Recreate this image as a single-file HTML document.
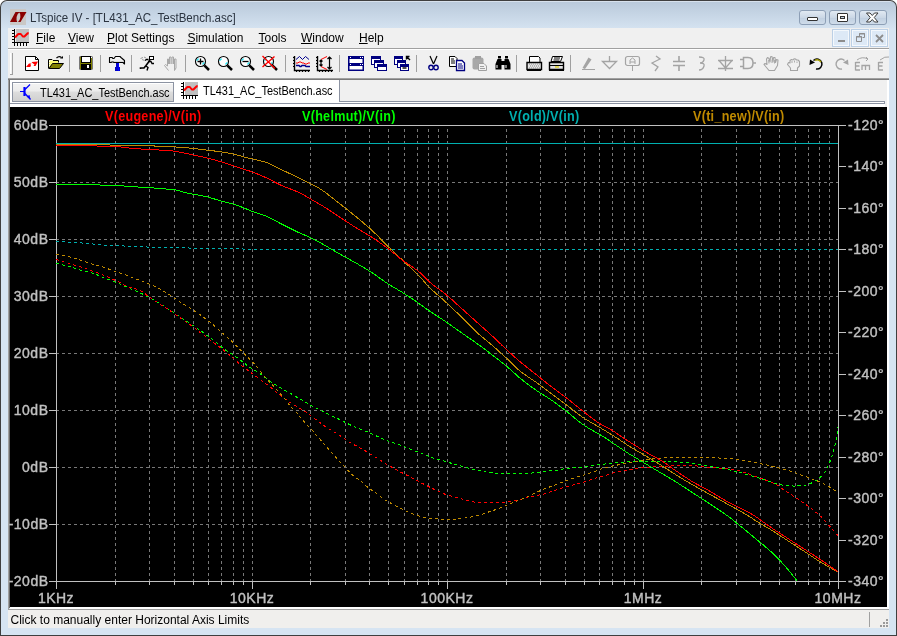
<!DOCTYPE html><html><head><meta charset="utf-8"><style>
*{margin:0;padding:0;box-sizing:border-box}
html,body{width:897px;height:636px;overflow:hidden;background:#fff}
body{position:relative;will-change:transform;font-family:"Liberation Sans",sans-serif;font-size:12px;color:#000}
.a{position:absolute}
.t{position:absolute;font-family:"Liberation Sans",sans-serif;font-size:12px;white-space:nowrap;line-height:14px;transform-origin:0 0}
.u{text-decoration:underline;text-underline-offset:1px}
svg{position:absolute;overflow:visible}
</style></head><body>

<div class="a" style="left:0;top:0;width:897px;height:636px;background:#3f3f3f;border-radius:7px 7px 0 0"></div>
<div class="a" style="left:1px;top:1px;width:895px;height:634px;border-radius:6px 6px 0 0;background:linear-gradient(#e6edf5 0px,#bacadb 1.5px,#d4e2f0 27px,#d6e4f2 28px,#d6e4f2 100%)"></div>
<svg class="a" style="left:10px;top:9px" width="16" height="16" viewBox="0 0 16 16"><rect width="16" height="16" fill="#cac8c6"/><path d="M5.5 3H10Q7.2 4.5 6.6 8Q6.2 11 7.2 13H0Z" fill="#8a0000"/><path d="M9 3H16.5L10.5 13H8Q10 11.5 10.4 8Q10.7 4.5 9 3Z" fill="#8a0000"/></svg>
<div class="t" style="left:30px;top:11px;color:#2b3440;transform:scaleX(0.962)">LTspice IV - [TL431_AC_TestBench.asc]</div>
<div class="a" style="left:799px;top:10px;width:27px;height:15px;border:1px solid #8d9fb6;border-radius:3px;background:linear-gradient(#e1e9f2,#cbd8e6 50%,#c0cfe0 51%,#cfdcea)"></div>
<div class="a" style="left:807px;top:17px;width:11px;height:4px;background:#fff;border:1px solid #333;border-radius:1px"></div>
<div class="a" style="left:829px;top:10px;width:27px;height:15px;border:1px solid #8d9fb6;border-radius:3px;background:linear-gradient(#e1e9f2,#cbd8e6 50%,#c0cfe0 51%,#cfdcea)"></div>
<div class="a" style="left:837px;top:13px;width:11px;height:9px;background:#fff;border:1px solid #333;border-radius:1px"></div><div class="a" style="left:840px;top:16px;width:5px;height:3px;background:#c4d3e3;border:1px solid #333"></div>
<div class="a" style="left:859px;top:10px;width:28px;height:15px;border:1px solid #8d9fb6;border-radius:3px;background:linear-gradient(#e1e9f2,#cbd8e6 50%,#c0cfe0 51%,#cfdcea)"></div>
<svg class="a" style="left:866px;top:12px" width="13" height="11" viewBox="0 0 13 11"><path d="M0.5 1H4L6.25 3.5L8.5 1H12L8.25 5.5L12 10H8.5L6.25 7.5L4 10H0.5L4.25 5.5Z" fill="#fff" stroke="#3a3a3a" stroke-linejoin="round"/></svg>
<div class="a" style="left:8px;top:28px;width:881px;height:20px;background:#f0f0f0"></div>
<div class="a" style="left:8px;top:48px;width:881px;height:1px;background:#a0a0a0"></div>
<div class="a" style="left:8px;top:49px;width:881px;height:1px;background:#fff"></div>
<svg class="a" style="left:12px;top:29px" width="18" height="17" viewBox="0 0 18 17" ><rect x="4" y="0" width="13" height="13" fill="#c0c0c0"/><path d="M2.5 0V17M0 13.5H17M0 1.5H2M0 4.5H2M0 7.5H2M0 10.5H2M5.5 14V17M8.5 14V17M11.5 14V17M14.5 14V17" stroke="#000" fill="none"/><path d="M3 8.5L6.3 5L8.8 5L10.8 7.5L12.4 7.5L15.7 4.2L16.7 4.5" stroke="#f00" stroke-width="2" fill="none" stroke-linejoin="round"/></svg>
<div class="t mt" style="left:36px;top:31px;color:#000"><span class="u">F</span>ile</div>
<div class="t mt" style="left:68px;top:31px;color:#000"><span class="u">V</span>iew</div>
<div class="t mt" style="left:107px;top:31px;color:#000"><span class="u">P</span>lot Settings</div>
<div class="t mt" style="left:187.4px;top:31px;color:#000"><span class="u">S</span>imulation</div>
<div class="t mt" style="left:258.5px;top:31px;color:#000"><span class="u">T</span>ools</div>
<div class="t mt" style="left:301px;top:31px;color:#000"><span class="u">W</span>indow</div>
<div class="t mt" style="left:359px;top:31px;color:#000"><span class="u">H</span>elp</div>
<div class="a" style="left:832px;top:29px;width:18px;height:18px;background:#dde9f6;border:1px solid #bcd0e6;box-shadow:inset 0 0 0 1px #f4f8fc"></div>
<div class="a" style="left:838px;top:40px;width:7px;height:2px;background:#8d8d8d"></div>
<div class="a" style="left:851px;top:29px;width:18px;height:18px;background:#dde9f6;border:1px solid #bcd0e6;box-shadow:inset 0 0 0 1px #f4f8fc"></div>
<svg class="a" style="left:856px;top:33px" width="9" height="9" viewBox="0 0 9 9"><path d="M3.5 .5H8.5V4.5H6.5M.5 3.5H5.5V8.5H.5Z M3.5 .5V3.5" stroke="#8d8d8d" fill="none"/><path d="M3 1H9M0 4H6" stroke="#8d8d8d"/></svg>
<div class="a" style="left:870px;top:29px;width:18px;height:18px;background:#dde9f6;border:1px solid #bcd0e6;box-shadow:inset 0 0 0 1px #f4f8fc"></div>
<svg class="a" style="left:875px;top:34px" width="9" height="9" viewBox="0 0 9 9"><path d="M1 1L8 8M8 1L1 8" stroke="#8d8d8d" stroke-width="1.8"/></svg>
<div class="a" style="left:8px;top:50px;width:881px;height:28px;background:#f0f0f0"></div>
<div class="a" style="left:10px;top:53px;width:1px;height:22px;background:#fff"></div>
<div class="a" style="left:12px;top:53px;width:1px;height:22px;background:#a0a0a0"></div>
<div class="a" style="left:10px;top:74px;width:3px;height:1px;background:#a0a0a0"></div>
<div class="a" style="left:69px;top:55px;width:1px;height:17px;background:#a0a0a0"></div>
<div class="a" style="left:100px;top:55px;width:1px;height:17px;background:#a0a0a0"></div>
<div class="a" style="left:131px;top:55px;width:1px;height:17px;background:#a0a0a0"></div>
<div class="a" style="left:185px;top:55px;width:1px;height:17px;background:#a0a0a0"></div>
<div class="a" style="left:285px;top:55px;width:1px;height:17px;background:#a0a0a0"></div>
<div class="a" style="left:339px;top:55px;width:1px;height:17px;background:#a0a0a0"></div>
<div class="a" style="left:416px;top:55px;width:1px;height:17px;background:#a0a0a0"></div>
<div class="a" style="left:516px;top:55px;width:1px;height:17px;background:#a0a0a0"></div>
<div class="a" style="left:570px;top:55px;width:1px;height:17px;background:#a0a0a0"></div>
<svg class="a" style="left:25px;top:56px" width="14" height="15" viewBox="0 0 14 15" ><path d="M0.5 0.5H10.5L13.5 3.5V14.5H0.5Z" fill="#fff" stroke="#000"/><path d="M10.5 0.5V3.5H13.5" fill="none" stroke="#000"/><path d="M1 11 L4 7.5 L6.5 7.5 L5.5 8.5 L6 10 L5 11 Z" fill="#f00"/><path d="M6.5 6 L13 5.5 L10.5 10 L8.5 10 L9.5 8.5 L8 7.5 Z" fill="#f00"/></svg>
<svg class="a" style="left:48px;top:56px" width="16" height="14" viewBox="0 0 16 14" ><path d="M0.5 12.5V3.5H4L5 4.5H10.5V6.5" fill="#f8f870" stroke="#000"/><path d="M1.5 4.5H4.5M1.5 12V5" stroke="#fff" stroke-dasharray="1 1"/><path d="M1 12.5L4.5 7.5H15.5L11.5 12.5Z" fill="#808000" stroke="#000"/><path d="M8.5 2Q11 -0.5 13.5 1.5" stroke="#000" fill="none" stroke-width="1.2"/><path d="M12 2.5H15V0Z" fill="#000"/></svg>
<svg class="a" style="left:79px;top:56px" width="14" height="14" viewBox="0 0 14 14" ><rect x="0.5" y="0.5" width="13" height="13" fill="#000"/><rect x="1" y="1" width="12" height="12" fill="#808000"/><rect x="2.5" y="0.5" width="9" height="6" fill="#fff" stroke="#000"/><rect x="2" y="8" width="10" height="6" fill="#000"/><rect x="8" y="9" width="2" height="3" fill="#fff"/><rect x="12" y="1" width="1" height="1" fill="#fff"/></svg>
<svg class="a" style="left:108px;top:56px" width="18" height="15" viewBox="0 0 18 15" ><defs><linearGradient id="hg" x1="0" y1="0" x2="0" y2="1"><stop offset="0" stop-color="#fff"/><stop offset="0.6" stop-color="#e8e8e8"/><stop offset="1" stop-color="#909090"/></linearGradient></defs><path d="M1.5 1.5H4L5 2.5H6L7.5 0.5H12L13 1.5L16.5 4.5V8L15 6.5H6L5 6H4L3 6.5H1.5Z" fill="url(#hg)" stroke="#000" stroke-width="1.1" stroke-linejoin="round"/><rect x="8" y="7" width="3" height="4.5" fill="#0000c8"/><rect x="7" y="11" width="5" height="4" fill="#0000c8"/><rect x="10" y="7" width="1" height="8" fill="#0000ff"/></svg>
<svg class="a" style="left:140px;top:56px" width="15" height="15" viewBox="0 0 15 15" ><path d="M0.5 13V12H4L6 9.5L9 5.5L10 4" stroke="#000" stroke-width="1.6" fill="none"/><path d="M6 10L8 11.5L7 14.5" stroke="#000" stroke-width="1.4" fill="none"/><path d="M8 5.5H11L12 7.5H14M5 4.5L6.5 3.5H8.5" stroke="#000" stroke-width="1.3" fill="none"/><rect x="9.5" y="0.5" width="4" height="3" fill="#fff" stroke="#000"/><path d="M2 3.5L4.5 4.5M0.5 2.5L3 1.5M4 1L6 2" stroke="#999"/></svg>
<svg class="a" style="left:164px;top:56px" width="14" height="15" viewBox="0 0 14 15" ><path d="M4.5 14.5L0.5 9.5L1.5 8.5L3.5 10V3H4.5V8M5.5 8V1H7V8M8 8V1H9.5V8M10.5 8V3H12V12L10.5 14.5Z" fill="none" stroke="#a8a8a8"/></svg>
<svg class="a" style="left:194px;top:56px" width="16" height="16" viewBox="0 0 16 16" ><circle cx="6.5" cy="5.5" r="5" fill="#fff" stroke="#000" stroke-width="1.15"/><path d="M2.6 4.6L4.6 2.6M8.4 8.4L10.4 6.4" stroke="#18e8f8" stroke-width="1.3" fill="none"/><path d="M10.3 9.3L15 14" stroke="#000" stroke-width="2.5"/><path d="M3.5 5.5H9.5M6.5 2.5V8.5" stroke="#000" stroke-width="1.3"/></svg>
<svg class="a" style="left:217px;top:56px" width="16" height="16" viewBox="0 0 16 16" ><circle cx="6.5" cy="5.5" r="5" fill="#fff" stroke="#000" stroke-width="1.15"/><path d="M2.6 4.6L4.6 2.6M8.4 8.4L10.4 6.4" stroke="#18e8f8" stroke-width="1.3" fill="none"/><path d="M10.3 9.3L15 14" stroke="#000" stroke-width="2.5"/></svg>
<svg class="a" style="left:239px;top:56px" width="16" height="16" viewBox="0 0 16 16" ><circle cx="6.5" cy="5.5" r="5" fill="#fff" stroke="#000" stroke-width="1.15"/><path d="M2.6 4.6L4.6 2.6M8.4 8.4L10.4 6.4" stroke="#18e8f8" stroke-width="1.3" fill="none"/><path d="M10.3 9.3L15 14" stroke="#000" stroke-width="2.5"/><path d="M3.5 5.5H9.5" stroke="#000" stroke-width="1.3"/></svg>
<svg class="a" style="left:262px;top:56px" width="16" height="16" viewBox="0 0 16 16" ><circle cx="6.5" cy="5.5" r="5" fill="#fff" stroke="#000" stroke-width="1.15"/><path d="M2.6 4.6L4.6 2.6M8.4 8.4L10.4 6.4" stroke="#18e8f8" stroke-width="1.3" fill="none"/><path d="M10.3 9.3L15 14" stroke="#000" stroke-width="2.5"/><path d="M0.5 0L13 12.5M12.5 0.5L0.5 11" stroke="#f00" stroke-width="1.4"/></svg>
<svg class="a" style="left:293px;top:56px" width="18" height="16" viewBox="0 0 18 16" ><path d="M1.5 0V14.5H17" stroke="#000" fill="none" stroke-width="1.4"/><path d="M0 1.5H1M0 4.5H1M0 7.5H1M0 10.5H1M3.5 15V16M6.5 15V16M9.5 15V16M12.5 15V16M15.5 15V16" stroke="#000"/><path d="M3 3.5L6.5 0.5L9.5 3.5L12.5 0.5L16 3.5" stroke="#00008c" fill="none"/><path d="M3 7H5L6 6H8L9 7H11L12 8H14L15 7H17" stroke="#f00" fill="none"/><path d="M3 9.5H6L7 10.5H8L9 9.5H12L13 10.5H17" stroke="#00008c" stroke-width="1.5" fill="none"/></svg>
<svg class="a" style="left:316px;top:56px" width="18" height="16" viewBox="0 0 18 16" ><path d="M1.5 0V14.5H17" stroke="#000" fill="none" stroke-width="1.4"/><path d="M0 1.5H1M0 4.5H1M0 7.5H1M0 10.5H1M3.5 15V16M6.5 15V16M9.5 15V16M12.5 15V16M15.5 15V16" stroke="#000"/><path d="M11 0.5L5 3.5M5 10.5L11 13.5" stroke="#f00" fill="none"/><path d="M5 4V10M3.5 5.5L5 4L6.5 5.5M3.5 8.5L5 10L6.5 8.5" stroke="#000" fill="none" stroke-width="1.2"/><path d="M13.5 1V13M11.5 3L13.5 1L15.5 3M11.5 11L13.5 13L15.5 11" stroke="#000" fill="none" stroke-width="1.2"/></svg>
<svg class="a" style="left:348px;top:56px" width="16" height="15" viewBox="0 0 16 15" ><rect x="0.75" y="0.75" width="14.5" height="13.5" fill="#fff" stroke="#000080" stroke-width="1.5"/><rect x="0" y="0" width="16" height="3" fill="#000080"/><rect x="0" y="7" width="16" height="3" fill="#000080"/><path d="M2 1.5h1M12 1.5h1M14 1.5h1M2 8.5h1M12 8.5h1M14 8.5h1" stroke="#fff"/></svg>
<svg class="a" style="left:371px;top:56px" width="16" height="15" viewBox="0 0 16 15" ><rect x="0.5" y="0.5" width="9" height="8" fill="#fff" stroke="#000080"/><rect x="0" y="0" width="10" height="3" fill="#000080"/><rect x="3.5" y="4.5" width="9" height="7" fill="#fff" stroke="#000080"/><rect x="3" y="4" width="10" height="3" fill="#000080"/><rect x="6.5" y="8.5" width="9" height="6" fill="#fff" stroke="#000080"/><rect x="6" y="8" width="10" height="3" fill="#000080"/></svg>
<svg class="a" style="left:394px;top:56px" width="17" height="15" viewBox="0 0 17 15" ><rect x="0.5" y="0.5" width="8" height="8" fill="#fff" stroke="#000080"/><rect x="0" y="0" width="9" height="3" fill="#000080"/><rect x="3.5" y="4.5" width="8" height="7" fill="#fff" stroke="#000080"/><rect x="3" y="4" width="9" height="3" fill="#000080"/><rect x="6.5" y="8.5" width="8" height="6" fill="#fff" stroke="#000080"/><rect x="6" y="8" width="9" height="3" fill="#000080"/><path d="M8.5 12H12.5" stroke="#000" stroke-width="1.4"/><path d="M16 4L12.5 0.5M12.5 3.5V0.5H15.5" stroke="#000" stroke-width="1.4" fill="none"/></svg>
<svg class="a" style="left:428px;top:56px" width="11" height="15" viewBox="0 0 11 15" ><path d="M2 0L5.5 8M9 0L5.5 8" stroke="#000" fill="none" stroke-width="1.2"/><circle cx="3" cy="11.5" r="2.2" fill="none" stroke="#000080" stroke-width="1.4"/><circle cx="8" cy="11.5" r="2.2" fill="none" stroke="#000080" stroke-width="1.4"/></svg>
<svg class="a" style="left:449px;top:56px" width="16" height="15" viewBox="0 0 16 15" ><path d="M0.5 0.5H6L8 2.5V10.5H0.5Z" fill="#fff" stroke="#000"/><path d="M2 3H5M2 5H6M2 7H6" stroke="#000"/><path d="M7.5 4.5H13L15.5 7V14.5H7.5Z" fill="#fff" stroke="#000080" stroke-width="1.3"/><path d="M9 8H13M9 10H14M9 12H14" stroke="#000080"/></svg>
<svg class="a" style="left:472px;top:56px" width="15" height="15" viewBox="0 0 15 15" ><rect x="0.5" y="1.5" width="11" height="12" rx="2" fill="#a8a8a8"/><rect x="3" y="0" width="6" height="3" fill="#a0a0a0"/><path d="M6.5 7.5H12L14.5 10V14.5H6.5Z" fill="#f0f0f0" stroke="#a0a0a0"/><path d="M8 10.5H12M8 12.5H13" stroke="#a0a0a0"/></svg>
<svg class="a" style="left:495px;top:56px" width="16" height="14" viewBox="0 0 16 14" ><path d="M0.5 13.5V8L2.5 3H6.5V13.5ZM9.5 13.5V3H13.5L15.5 8V13.5Z" fill="#000"/><rect x="6" y="5" width="4" height="4" fill="#000"/><rect x="3" y="0" width="3" height="2.5" fill="#000"/><rect x="10" y="0" width="3" height="2.5" fill="#000"/><path d="M2 9V12M11 9V12" stroke="#fff"/></svg>
<svg class="a" style="left:526px;top:56px" width="16" height="15" viewBox="0 0 16 15" ><path d="M3.5 0.5H12.5L14 2V6.5H3.5Z" fill="#fff" stroke="#000"/><path d="M1 6.5H15.5V13.5H1Z" fill="#e4e4e4" stroke="#000" stroke-width="1.4"/><path d="M3 8h1M5 8h1M7 8h1M9 8h1M11 8h1M13 8h1M4 10h1M6 10h1M8 10h1M10 10h1M12 10h1M3 12h1M5 12h1M7 12h1M9 12h1M11 12h1M13 12h1" stroke="#888"/><path d="M1 14.5H15" stroke="#000"/></svg>
<svg class="a" style="left:548px;top:56px" width="17" height="15" viewBox="0 0 17 15" ><path d="M4.5 0.5H14.5L12.5 5.5H3Z" fill="#fff" stroke="#000"/><path d="M6 2H12M5.5 4H11.5" stroke="#000"/><path d="M1.5 6.5H15.5V13.5H1.5Z" fill="#e4e4e4" stroke="#000" stroke-width="1.4"/><path d="M2 9.5H15" stroke="#000"/><path d="M7 11H11" stroke="#e0d000" stroke-width="1.2"/><path d="M1 14.5H16" stroke="#000"/></svg>
<svg class="a" style="left:581px;top:56px" width="15" height="14" viewBox="0 0 15 14" ><path d="M1.5 12L7.5 1.5L10.5 3.5L4 13Z" fill="#a4a4a4"/><path d="M1 13.5H14" stroke="#a4a4a4"/></svg>
<svg class="a" style="left:602px;top:56px" width="15" height="14" viewBox="0 0 15 14" ><path d="M7.5 0V5.5M0.5 5.5H14.5L7.5 12.5Z" stroke="#a4a4a4" fill="none" stroke-width="1.3"/></svg>
<svg class="a" style="left:625px;top:56px" width="15" height="15" viewBox="0 0 15 15" ><rect x="0.5" y="0.5" width="14" height="9" rx="2" fill="none" stroke="#a4a4a4" stroke-width="1.2"/><path d="M5 8V4L7.5 2L10 4V8M5 6H10" stroke="#a4a4a4" fill="none"/><path d="M7.5 10V15" stroke="#a4a4a4"/></svg>
<svg class="a" style="left:650px;top:56px" width="12" height="15" viewBox="0 0 12 15" ><path d="M6 0L10 3L2 7L8 11L5 15" stroke="#a4a4a4" fill="none" stroke-width="1.3"/></svg>
<svg class="a" style="left:673px;top:56px" width="12" height="15" viewBox="0 0 12 15" ><path d="M6 0V5M0 5.5H12M0 9.5H12M6 10V15" stroke="#a4a4a4" stroke-width="1.6"/></svg>
<svg class="a" style="left:698px;top:56px" width="8" height="15" viewBox="0 0 8 15" ><path d="M1 1Q7 1 6 4Q5 7 2 7Q7 7 6 10Q5 14 1 14" stroke="#a4a4a4" fill="none" stroke-width="1.3"/></svg>
<svg class="a" style="left:718px;top:56px" width="15" height="15" viewBox="0 0 15 15" ><path d="M7.5 0V15M0 4.5H15M0 12.5H15M1 4.5L7.5 12L14 4.5" stroke="#a4a4a4" fill="none" stroke-width="1.3"/></svg>
<svg class="a" style="left:740px;top:56px" width="16" height="14" viewBox="0 0 16 14" ><path d="M0 3.5H4M0 10.5H4M3.5 1.5H8Q13 1.5 13 7Q13 12.5 8 12.5H3.5ZM13 7H16" stroke="#a4a4a4" fill="none" stroke-width="1.5"/></svg>
<svg class="a" style="left:763px;top:56px" width="17" height="15" viewBox="0 0 17 15" ><path d="M6 14.5L1 8.5L2 7.5L4 8.5L3.5 3L4.5 1.5L6 2.5L7 6L7.5 0.8L9 0.5L10 6L10.5 1.5L12 1.5L12.5 6.5L13.5 3.5L15 4L14.5 9.5L11.5 14.5Z" fill="none" stroke="#a4a4a4" stroke-width="1.1" stroke-linejoin="round"/><path d="M6 7.5L5.5 4M9 7L9 3.5M11.5 7.5L11.5 4" stroke="#a4a4a4" stroke-width="0.9"/></svg>
<svg class="a" style="left:787px;top:58px" width="14" height="13" viewBox="0 0 14 13" ><path d="M3.5 12.5V10L0.5 6.5L1.5 4.5L3 5V2.5L4.5 1.5L6 2L7 0.8L8.5 1L9.5 2L11 2L12.5 3.5V8L10.5 10V12.5Z" fill="none" stroke="#a4a4a4" stroke-width="1.1" stroke-linejoin="round"/><path d="M5 5V3M7.5 4.5V2.5M10 5V3.5" stroke="#a4a4a4" stroke-width="0.9"/></svg>
<svg class="a" style="left:809px;top:57px" width="16" height="14" viewBox="0 0 16 14" ><path d="M4.5 3.5A5 5 0 1 1 7 12" stroke="#000" stroke-width="1.5" fill="none"/><path d="M6 3.2A5 5 0 0 1 12 5" stroke="#a8a000" stroke-width="1.5" fill="none"/><path d="M0.5 8L1 2.5L6 5.5Z" fill="#000"/></svg>
<svg class="a" style="left:833px;top:57px" width="16" height="14" viewBox="0 0 16 14" ><path d="M11.5 3.5A5 5 0 1 0 9 12" stroke="#a4a4a4" stroke-width="1.4" fill="none"/><path d="M15.5 8L15 2.5L10 5.5Z" fill="#a4a4a4"/></svg>
<svg class="a" style="left:854px;top:56px" width="17" height="15" viewBox="0 0 17 15" ><path d="M1.5 6V14.5M1.5 6.5H6M1.5 10H5.5M1.5 14H6M8 14V9.5H15.5V14M11.5 9.5V14" stroke="#a4a4a4" fill="none" stroke-width="1.3"/><path d="M3 4Q8 0 14 3M12 1L14 3L12 5" stroke="#a4a4a4" fill="none"/></svg>
<svg class="a" style="left:877px;top:56px" width="12" height="15" viewBox="0 0 12 15" ><path d="M1.5 6V14.5M1.5 6.5H6M1.5 10H5.5M1.5 14H6" stroke="#a4a4a4" fill="none" stroke-width="1.3"/><path d="M3 4Q8 0 12 1" stroke="#a4a4a4" fill="none"/></svg>
<div class="a" style="left:8px;top:78px;width:881px;height:1px;background:#a0a0a0"></div>
<div class="a" style="left:8px;top:79px;width:881px;height:1px;background:#7a7a7a"></div>
<div class="a" style="left:10px;top:80px;width:877px;height:27px;background:#fff"></div>
<div class="a" style="left:339px;top:80px;width:548px;height:27px;background:#f0f0f0"></div>
<div class="a" style="left:339px;top:80px;width:1px;height:22px;background:#8c93a2"></div>
<div class="a" style="left:339px;top:101px;width:546px;height:3px;background:#fff;border:1px solid #8c93a2;border-left:0"></div>
<div class="a" style="left:10px;top:103px;width:330px;height:1px;background:#8c93a2"></div>
<div class="a" style="left:10px;top:104px;width:875px;height:3px;background:#fff"></div>
<div class="a" style="left:12px;top:82px;width:162px;height:20px;border:1px solid #8c93a2;background:linear-gradient(#f3f3f3,#ececec 45%,#dddddd 50%,#d0d0d0)"></div>
<div class="a" style="left:13px;top:83px;width:160px;height:1px;background:#fff"></div>
<svg class="a" style="left:20px;top:84px" width="12" height="17" viewBox="0 0 12 17" ><path d="M4.5 3V12" stroke="#00f" stroke-width="2.2"/><path d="M0 7.5H4M5 5.5L10 0.5M5 9.5L10.5 15.5" stroke="#00f" stroke-width="1.2" fill="none"/><path d="M6.5 12.5L10.5 15.5L9.5 11Z" fill="#00f"/></svg>
<div class="t tt" style="left:40px;top:86px;transform:scaleX(0.912)">TL431_AC_TestBench.asc</div>
<svg class="a" style="left:181px;top:82px" width="18" height="17" viewBox="0 0 18 17" ><rect x="4" y="0" width="13" height="13" fill="#c0c0c0"/><path d="M2.5 0V17M0 13.5H17M0 1.5H2M0 4.5H2M0 7.5H2M0 10.5H2M5.5 14V17M8.5 14V17M11.5 14V17M14.5 14V17" stroke="#000" fill="none"/><path d="M3 8.5L6.3 5L8.8 5L10.8 7.5L12.4 7.5L15.7 4.2L16.7 4.5" stroke="#f00" stroke-width="2" fill="none" stroke-linejoin="round"/></svg>
<div class="t tt" style="left:203px;top:84px;transform:scaleX(0.912)">TL431_AC_TestBench.asc</div>
<div class="a" style="left:8px;top:80px;width:1px;height:529px;background:#a0a0a0"></div>
<div class="a" style="left:9px;top:80px;width:1px;height:528px;background:#696969"></div>
<div class="a" style="left:10px;top:107px;width:877px;height:500px;background:#000"></div>
<div class="a" style="left:887px;top:80px;width:2px;height:529px;background:#fff"></div>
<div class="a" style="left:10px;top:607px;width:879px;height:2px;background:#fff"></div>
<svg class="a" style="left:0;top:0" width="897" height="636" viewBox="0 0 897 636">
<defs><clipPath id="pc"><rect x="56" y="125" width="783" height="457"/></clipPath></defs>
<path d="M56.5 125V581 M115.5 125V581 M149.5 125V581 M174.5 125V581 M193.5 125V581 M208.5 125V581 M221.5 125V581 M233.5 125V581 M243.5 125V581 M252.5 125V581 M310.5 125V581 M345.5 125V581 M369.5 125V581 M388.5 125V581 M404.5 125V581 M417.5 125V581 M428.5 125V581 M438.5 125V581 M447.5 125V581 M506.5 125V581 M540.5 125V581 M565.5 125V581 M584.5 125V581 M599.5 125V581 M612.5 125V581 M624.5 125V581 M634.5 125V581 M643.5 125V581 M701.5 125V581 M736.5 125V581 M760.5 125V581 M779.5 125V581 M795.5 125V581 M808.5 125V581 M819.5 125V581 M829.5 125V581 M838.5 125V581" stroke="#787878" stroke-dasharray="3 3" stroke-dashoffset="2" shape-rendering="crispEdges"/>
<path d="M56 182.5H838 M56 239.5H838 M56 296.5H838 M56 353.5H838 M56 410.5H838 M56 467.5H838 M56 524.5H838" stroke="#787878" stroke-dasharray="3 3" shape-rendering="crispEdges"/>
<path d="M56.5 581V589 M115.5 581V585 M149.5 581V585 M174.5 581V585 M193.5 581V585 M208.5 581V585 M221.5 581V585 M233.5 581V585 M243.5 581V585 M252.5 581V589 M310.5 581V585 M345.5 581V585 M369.5 581V585 M388.5 581V585 M404.5 581V585 M417.5 581V585 M428.5 581V585 M438.5 581V585 M447.5 581V589 M506.5 581V585 M540.5 581V585 M565.5 581V585 M584.5 581V585 M599.5 581V585 M612.5 581V585 M624.5 581V585 M634.5 581V585 M643.5 581V589 M701.5 581V585 M736.5 581V585 M760.5 581V585 M779.5 581V585 M795.5 581V585 M808.5 581V585 M819.5 581V585 M829.5 581V585 M838.5 581V589 M49 125.5H56 M49 182.5H56 M49 239.5H56 M49 296.5H56 M49 353.5H56 M49 410.5H56 M49 467.5H56 M49 524.5H56 M49 581.5H56 M838 125.5H846 M838 166.5H846 M838 208.5H846 M838 249.5H846 M838 291.5H846 M838 332.5H846 M838 374.5H846 M838 415.5H846 M838 457.5H846 M838 498.5H846 M838 540.5H846 M838 581.5H846" stroke="#c0c0c0" shape-rendering="crispEdges"/>
<path d="M56.5 125V581.5M838.5 125V581.5M56 125.5H839M56 581.5H839" stroke="#c0c0c0" shape-rendering="crispEdges"/>
<g clip-path="url(#pc)" fill="none" shape-rendering="crispEdges">
<path d="M56 143.5H838" stroke="#00b0b0"/>
<path d="M56.0 241.6 L57.0 241.6 L58.0 241.6 L59.0 241.7 L60.0 241.7 L61.0 241.7 L62.0 241.8 L63.0 241.8 L64.0 241.8 L65.0 241.9 L66.0 241.9 L67.0 242.0 L68.0 242.0 L69.0 242.1 L70.0 242.1 L71.0 242.2 L72.0 242.2 L73.0 242.3 L74.0 242.3 L75.0 242.4 L76.0 242.5 L77.0 242.5 L78.0 242.6 L79.0 242.7 L80.0 242.8 L81.0 242.9 L82.0 243.0 L83.0 243.1 L84.0 243.2 L85.0 243.3 L86.0 243.4 L87.0 243.5 L88.0 243.6 L89.0 243.7 L90.0 243.8 L91.0 243.9 L92.0 243.9 L93.0 244.0 L94.0 244.1 L95.0 244.2 L96.0 244.3 L97.0 244.4 L98.0 244.5 L99.0 244.6 L100.0 244.7 L101.0 244.8 L102.0 244.8 L103.0 244.9 L104.0 245.0 L105.0 245.1 L106.0 245.2 L107.0 245.3 L108.0 245.3 L109.0 245.4 L110.0 245.4 L111.0 245.5 L112.0 245.5 L113.0 245.6 L114.0 245.6 L115.0 245.7 L116.0 245.7 L117.0 245.7 L118.0 245.8 L119.0 245.8 L120.0 245.8 L121.0 245.9 L122.0 245.9 L123.0 245.9 L124.0 246.0 L125.0 246.0 L126.0 246.0 L127.0 246.0 L128.0 246.1 L129.0 246.1 L130.0 246.1 L131.0 246.2 L132.0 246.2 L133.0 246.2 L134.0 246.3 L135.0 246.3 L136.0 246.4 L137.0 246.4 L138.0 246.5 L139.0 246.5 L140.0 246.6 L141.0 246.6 L142.0 246.7 L143.0 246.8 L144.0 246.8 L145.0 246.9 L146.0 246.9 L147.0 247.0 L148.0 247.1 L149.0 247.1 L150.0 247.2 L151.0 247.2 L152.0 247.2 L153.0 247.3 L154.0 247.3 L155.0 247.3 L156.0 247.4 L157.0 247.4 L158.0 247.4 L159.0 247.4 L160.0 247.5 L161.0 247.5 L162.0 247.5 L163.0 247.5 L164.0 247.6 L165.0 247.6 L166.0 247.6 L167.0 247.6 L168.0 247.6 L169.0 247.7 L170.0 247.7 L171.0 247.7 L172.0 247.7 L173.0 247.7 L174.0 247.7 L175.0 247.8 L176.0 247.8 L177.0 247.8 L178.0 247.8 L179.0 247.8 L180.0 247.8 L181.0 247.8 L182.0 247.9 L183.0 247.9 L184.0 247.9 L185.0 247.9 L186.0 247.9 L187.0 247.9 L188.0 247.9 L189.0 248.0 L190.0 248.0 L191.0 248.0 L192.0 248.0 L193.0 248.0 L194.0 248.0 L195.0 248.1 L196.0 248.1 L197.0 248.1 L198.0 248.1 L199.0 248.1 L200.0 248.1 L201.0 248.2 L202.0 248.2 L203.0 248.2 L204.0 248.2 L205.0 248.2 L206.0 248.3 L207.0 248.3 L208.0 248.3 L209.0 248.3 L210.0 248.4 L211.0 248.4 L212.0 248.4 L213.0 248.4 L214.0 248.4 L215.0 248.5 L216.0 248.5 L217.0 248.5 L218.0 248.5 L219.0 248.5 L220.0 248.6 L221.0 248.6 L222.0 248.6 L223.0 248.6 L224.0 248.7 L225.0 248.7 L226.0 248.7 L227.0 248.7 L228.0 248.7 L229.0 248.8 L230.0 248.8 L231.0 248.8 L232.0 248.8 L233.0 248.8 L234.0 248.8 L235.0 248.9 L236.0 248.9 L237.0 248.9 L238.0 248.9 L239.0 248.9 L240.0 248.9 L241.0 248.9 L242.0 248.9 L243.0 249.0 L244.0 249.0 L245.0 249.0 L246.0 249.0 L247.0 249.0 L248.0 249.0 L249.0 249.0 L250.0 249.0 L251.0 249.0 L252.0 249.0 L253.0 249.0 L254.0 249.0 L255.0 249.0 L256.0 249.0 L257.0 249.0 L258.0 249.0 L259.0 249.0 L260.0 249.0 L261.0 249.0 L262.0 249.0 L263.0 249.0 L264.0 249.0 L265.0 249.0 L266.0 249.0 L267.0 249.0 L268.0 249.0 L269.0 249.0 L270.0 249.0 L271.0 249.0 L272.0 249.0 L273.0 249.0 L274.0 249.0 L275.0 249.1 L276.0 249.1 L277.0 249.1 L278.0 249.1 L279.0 249.1 L280.0 249.1 L281.0 249.1 L282.0 249.1 L283.0 249.1 L284.0 249.1 L285.0 249.1 L286.0 249.1 L287.0 249.1 L288.0 249.1 L289.0 249.1 L290.0 249.1 L291.0 249.1 L292.0 249.1 L293.0 249.1 L294.0 249.1 L295.0 249.1 L296.0 249.1 L297.0 249.1 L298.0 249.1 L299.0 249.1 L300.0 249.1 L301.0 249.1 L302.0 249.1 L303.0 249.1 L304.0 249.1 L305.0 249.1 L306.0 249.1 L307.0 249.1 L308.0 249.1 L309.0 249.1 L310.0 249.1 L311.0 249.1 L312.0 249.1 L313.0 249.1 L314.0 249.1 L315.0 249.1 L316.0 249.1 L317.0 249.1 L318.0 249.1 L319.0 249.1 L320.0 249.1 L321.0 249.1 L322.0 249.1 L323.0 249.1 L324.0 249.1 L325.0 249.1 L326.0 249.1 L327.0 249.1 L328.0 249.1 L329.0 249.1 L330.0 249.1 L331.0 249.1 L332.0 249.1 L333.0 249.1 L334.0 249.1 L335.0 249.1 L336.0 249.1 L337.0 249.1 L338.0 249.1 L339.0 249.1 L340.0 249.1 L341.0 249.1 L342.0 249.1 L343.0 249.1 L344.0 249.1 L345.0 249.1 L346.0 249.1 L347.0 249.1 L348.0 249.1 L349.0 249.1 L350.0 249.1 L351.0 249.1 L352.0 249.1 L353.0 249.1 L354.0 249.1 L355.0 249.2 L356.0 249.2 L357.0 249.2 L358.0 249.2 L359.0 249.2 L360.0 249.2 L361.0 249.2 L362.0 249.2 L363.0 249.2 L364.0 249.2 L365.0 249.2 L366.0 249.2 L367.0 249.2 L368.0 249.2 L369.0 249.2 L370.0 249.2 L371.0 249.2 L372.0 249.2 L373.0 249.2 L374.0 249.2 L375.0 249.2 L376.0 249.2 L377.0 249.2 L378.0 249.2 L379.0 249.2 L380.0 249.2 L381.0 249.2 L382.0 249.2 L383.0 249.2 L384.0 249.2 L385.0 249.2 L386.0 249.2 L387.0 249.2 L388.0 249.2 L389.0 249.2 L390.0 249.2 L391.0 249.2 L392.0 249.2 L393.0 249.2 L394.0 249.2 L395.0 249.2 L396.0 249.2 L397.0 249.2 L398.0 249.2 L399.0 249.2 L400.0 249.2 L401.0 249.2 L402.0 249.2 L403.0 249.2 L404.0 249.2 L405.0 249.2 L406.0 249.2 L407.0 249.2 L408.0 249.2 L409.0 249.2 L410.0 249.2 L411.0 249.2 L412.0 249.2 L413.0 249.2 L414.0 249.2 L415.0 249.2 L416.0 249.2 L417.0 249.2 L418.0 249.2 L419.0 249.2 L420.0 249.2 L421.0 249.2 L422.0 249.2 L423.0 249.2 L424.0 249.2 L425.0 249.2 L426.0 249.2 L427.0 249.2 L428.0 249.2 L429.0 249.2 L430.0 249.2 L431.0 249.2 L432.0 249.2 L433.0 249.2 L434.0 249.2 L435.0 249.2 L436.0 249.2 L437.0 249.2 L438.0 249.2 L439.0 249.2 L440.0 249.2 L441.0 249.2 L442.0 249.2 L443.0 249.2 L444.0 249.2 L445.0 249.2 L446.0 249.2 L447.0 249.2 L448.0 249.2 L449.0 249.2 L450.0 249.2 L451.0 249.2 L452.0 249.2 L453.0 249.2 L454.0 249.2 L455.0 249.2 L456.0 249.2 L457.0 249.2 L458.0 249.2 L459.0 249.2 L460.0 249.2 L461.0 249.2 L462.0 249.2 L463.0 249.2 L464.0 249.2 L465.0 249.2 L466.0 249.2 L467.0 249.2 L468.0 249.2 L469.0 249.2 L470.0 249.2 L471.0 249.2 L472.0 249.2 L473.0 249.2 L474.0 249.2 L475.0 249.2 L476.0 249.2 L477.0 249.2 L478.0 249.2 L479.0 249.2 L480.0 249.2 L481.0 249.2 L482.0 249.2 L483.0 249.2 L484.0 249.2 L485.0 249.2 L486.0 249.2 L487.0 249.2 L488.0 249.2 L489.0 249.2 L490.0 249.2 L491.0 249.2 L492.0 249.2 L493.0 249.2 L494.0 249.2 L495.0 249.2 L496.0 249.2 L497.0 249.2 L498.0 249.2 L499.0 249.2 L500.0 249.2 L501.0 249.2 L502.0 249.2 L503.0 249.2 L504.0 249.2 L505.0 249.2 L506.0 249.2 L507.0 249.2 L508.0 249.2 L509.0 249.2 L510.0 249.2 L511.0 249.2 L512.0 249.2 L513.0 249.2 L514.0 249.2 L515.0 249.2 L516.0 249.2 L517.0 249.2 L518.0 249.2 L519.0 249.2 L520.0 249.2 L521.0 249.2 L522.0 249.2 L523.0 249.2 L524.0 249.2 L525.0 249.2 L526.0 249.2 L527.0 249.2 L528.0 249.2 L529.0 249.2 L530.0 249.2 L531.0 249.2 L532.0 249.2 L533.0 249.2 L534.0 249.2 L535.0 249.2 L536.0 249.2 L537.0 249.2 L538.0 249.2 L539.0 249.2 L540.0 249.2 L541.0 249.2 L542.0 249.2 L543.0 249.2 L544.0 249.2 L545.0 249.2 L546.0 249.2 L547.0 249.2 L548.0 249.2 L549.0 249.2 L550.0 249.2 L551.0 249.2 L552.0 249.2 L553.0 249.2 L554.0 249.2 L555.0 249.2 L556.0 249.2 L557.0 249.2 L558.0 249.2 L559.0 249.2 L560.0 249.2 L561.0 249.2 L562.0 249.2 L563.0 249.2 L564.0 249.2 L565.0 249.2 L566.0 249.2 L567.0 249.2 L568.0 249.2 L569.0 249.2 L570.0 249.2 L571.0 249.2 L572.0 249.2 L573.0 249.2 L574.0 249.2 L575.0 249.2 L576.0 249.2 L577.0 249.3 L578.0 249.3 L579.0 249.3 L580.0 249.3 L581.0 249.3 L582.0 249.3 L583.0 249.3 L584.0 249.3 L585.0 249.3 L586.0 249.3 L587.0 249.3 L588.0 249.3 L589.0 249.3 L590.0 249.3 L591.0 249.3 L592.0 249.3 L593.0 249.3 L594.0 249.3 L595.0 249.3 L596.0 249.3 L597.0 249.3 L598.0 249.3 L599.0 249.3 L600.0 249.3 L601.0 249.3 L602.0 249.3 L603.0 249.3 L604.0 249.3 L605.0 249.3 L606.0 249.3 L607.0 249.3 L608.0 249.3 L609.0 249.3 L610.0 249.3 L611.0 249.3 L612.0 249.3 L613.0 249.3 L614.0 249.3 L615.0 249.3 L616.0 249.3 L617.0 249.3 L618.0 249.3 L619.0 249.3 L620.0 249.3 L621.0 249.3 L622.0 249.3 L623.0 249.3 L624.0 249.3 L625.0 249.3 L626.0 249.3 L627.0 249.3 L628.0 249.3 L629.0 249.3 L630.0 249.3 L631.0 249.3 L632.0 249.3 L633.0 249.3 L634.0 249.3 L635.0 249.3 L636.0 249.3 L637.0 249.3 L638.0 249.3 L639.0 249.3 L640.0 249.3 L641.0 249.3 L642.0 249.3 L643.0 249.3 L644.0 249.3 L645.0 249.3 L646.0 249.3 L647.0 249.3 L648.0 249.3 L649.0 249.3 L650.0 249.3 L651.0 249.3 L652.0 249.3 L653.0 249.3 L654.0 249.3 L655.0 249.3 L656.0 249.3 L657.0 249.3 L658.0 249.3 L659.0 249.3 L660.0 249.3 L661.0 249.3 L662.0 249.3 L663.0 249.3 L664.0 249.3 L665.0 249.3 L666.0 249.3 L667.0 249.3 L668.0 249.3 L669.0 249.3 L670.0 249.3 L671.0 249.3 L672.0 249.3 L673.0 249.3 L674.0 249.3 L675.0 249.3 L676.0 249.3 L677.0 249.3 L678.0 249.3 L679.0 249.3 L680.0 249.3 L681.0 249.3 L682.0 249.3 L683.0 249.3 L684.0 249.3 L685.0 249.3 L686.0 249.3 L687.0 249.3 L688.0 249.3 L689.0 249.3 L690.0 249.3 L691.0 249.3 L692.0 249.3 L693.0 249.3 L694.0 249.3 L695.0 249.3 L696.0 249.3 L697.0 249.3 L698.0 249.3 L699.0 249.3 L700.0 249.3 L701.0 249.3 L702.0 249.3 L703.0 249.3 L704.0 249.3 L705.0 249.3 L706.0 249.3 L707.0 249.3 L708.0 249.3 L709.0 249.3 L710.0 249.3 L711.0 249.3 L712.0 249.3 L713.0 249.3 L714.0 249.3 L715.0 249.3 L716.0 249.3 L717.0 249.3 L718.0 249.3 L719.0 249.3 L720.0 249.3 L721.0 249.3 L722.0 249.3 L723.0 249.3 L724.0 249.3 L725.0 249.3 L726.0 249.3 L727.0 249.3 L728.0 249.3 L729.0 249.3 L730.0 249.3 L731.0 249.3 L732.0 249.3 L733.0 249.3 L734.0 249.3 L735.0 249.3 L736.0 249.3 L737.0 249.3 L738.0 249.3 L739.0 249.3 L740.0 249.3 L741.0 249.3 L742.0 249.3 L743.0 249.3 L744.0 249.3 L745.0 249.3 L746.0 249.3 L747.0 249.3 L748.0 249.3 L749.0 249.3 L750.0 249.3 L751.0 249.3 L752.0 249.3 L753.0 249.3 L754.0 249.3 L755.0 249.3 L756.0 249.3 L757.0 249.3 L758.0 249.3 L759.0 249.3 L760.0 249.3 L761.0 249.3 L762.0 249.3 L763.0 249.3 L764.0 249.3 L765.0 249.3 L766.0 249.3 L767.0 249.3 L768.0 249.3 L769.0 249.3 L770.0 249.3 L771.0 249.3 L772.0 249.3 L773.0 249.3 L774.0 249.3 L775.0 249.3 L776.0 249.3 L777.0 249.3 L778.0 249.3 L779.0 249.3 L780.0 249.3 L781.0 249.3 L782.0 249.3 L783.0 249.3 L784.0 249.3 L785.0 249.3 L786.0 249.3 L787.0 249.3 L788.0 249.3 L789.0 249.3 L790.0 249.3 L791.0 249.3 L792.0 249.3 L793.0 249.3 L794.0 249.3 L795.0 249.3 L796.0 249.3 L797.0 249.3 L798.0 249.3 L799.0 249.3 L800.0 249.3 L801.0 249.3 L802.0 249.3 L803.0 249.3 L804.0 249.3 L805.0 249.3 L806.0 249.3 L807.0 249.3 L808.0 249.3 L809.0 249.3 L810.0 249.3 L811.0 249.3 L812.0 249.3 L813.0 249.3 L814.0 249.3 L815.0 249.3 L816.0 249.3 L817.0 249.3 L818.0 249.3 L819.0 249.3 L820.0 249.3 L821.0 249.3 L822.0 249.3 L823.0 249.3 L824.0 249.3 L825.0 249.3 L826.0 249.3 L827.0 249.3 L828.0 249.3 L829.0 249.3 L830.0 249.3 L831.0 249.3 L832.0 249.3 L833.0 249.3 L834.0 249.3 L835.0 249.3 L836.0 249.3 L837.0 249.3 L838.0 249.3" stroke="#00b0b0" stroke-dasharray="3 3"/>
<path d="M56.0 263.3 L57.0 263.5 L58.0 263.7 L59.0 264.0 L60.0 264.2 L61.0 264.4 L62.0 264.7 L63.0 264.9 L64.0 265.2 L65.0 265.4 L66.0 265.7 L67.0 266.0 L68.0 266.2 L69.0 266.5 L70.0 266.8 L71.0 267.1 L72.0 267.4 L73.0 267.8 L74.0 268.1 L75.0 268.4 L76.0 268.8 L77.0 269.1 L78.0 269.4 L79.0 269.7 L80.0 270.1 L81.0 270.3 L82.0 270.6 L83.0 270.9 L84.0 271.1 L85.0 271.3 L86.0 271.6 L87.0 271.8 L88.0 272.0 L89.0 272.2 L90.0 272.5 L91.0 272.7 L92.0 273.0 L93.0 273.3 L94.0 273.6 L95.0 273.9 L96.0 274.3 L97.0 274.8 L98.0 275.2 L99.0 275.7 L100.0 276.1 L101.0 276.6 L102.0 277.0 L103.0 277.5 L104.0 277.9 L105.0 278.3 L106.0 278.7 L107.0 279.1 L108.0 279.4 L109.0 279.8 L110.0 280.1 L111.0 280.5 L112.0 280.8 L113.0 281.2 L114.0 281.5 L115.0 281.9 L116.0 282.3 L117.0 282.7 L118.0 283.1 L119.0 283.5 L120.0 284.0 L121.0 284.4 L122.0 284.9 L123.0 285.3 L124.0 285.8 L125.0 286.2 L126.0 286.7 L127.0 287.1 L128.0 287.6 L129.0 288.0 L130.0 288.4 L131.0 288.9 L132.0 289.3 L133.0 289.7 L134.0 290.1 L135.0 290.6 L136.0 291.0 L137.0 291.4 L138.0 291.9 L139.0 292.3 L140.0 292.8 L141.0 293.3 L142.0 293.8 L143.0 294.3 L144.0 294.8 L145.0 295.3 L146.0 295.8 L147.0 296.3 L148.0 296.9 L149.0 297.4 L150.0 298.0 L151.0 298.5 L152.0 299.1 L153.0 299.6 L154.0 300.2 L155.0 300.8 L156.0 301.3 L157.0 301.9 L158.0 302.5 L159.0 303.1 L160.0 303.7 L161.0 304.4 L162.0 305.0 L163.0 305.6 L164.0 306.2 L165.0 306.9 L166.0 307.5 L167.0 308.2 L168.0 308.8 L169.0 309.5 L170.0 310.1 L171.0 310.8 L172.0 311.4 L173.0 312.1 L174.0 312.8 L175.0 313.5 L176.0 314.1 L177.0 314.8 L178.0 315.5 L179.0 316.1 L180.0 316.8 L181.0 317.5 L182.0 318.2 L183.0 318.9 L184.0 319.5 L185.0 320.2 L186.0 320.9 L187.0 321.6 L188.0 322.2 L189.0 322.9 L190.0 323.6 L191.0 324.2 L192.0 324.9 L193.0 325.5 L194.0 326.2 L195.0 326.8 L196.0 327.5 L197.0 328.1 L198.0 328.8 L199.0 329.5 L200.0 330.1 L201.0 330.9 L202.0 331.6 L203.0 332.3 L204.0 333.1 L205.0 333.8 L206.0 334.6 L207.0 335.3 L208.0 336.1 L209.0 336.9 L210.0 337.7 L211.0 338.5 L212.0 339.2 L213.0 340.0 L214.0 340.8 L215.0 341.6 L216.0 342.4 L217.0 343.2 L218.0 344.1 L219.0 344.9 L220.0 345.7 L221.0 346.5 L222.0 347.3 L223.0 348.1 L224.0 348.8 L225.0 349.6 L226.0 350.3 L227.0 351.0 L228.0 351.6 L229.0 352.3 L230.0 352.9 L231.0 353.6 L232.0 354.2 L233.0 354.8 L234.0 355.5 L235.0 356.1 L236.0 356.8 L237.0 357.5 L238.0 358.2 L239.0 359.0 L240.0 359.8 L241.0 360.5 L242.0 361.3 L243.0 362.1 L244.0 362.9 L245.0 363.7 L246.0 364.5 L247.0 365.3 L248.0 366.0 L249.0 366.7 L250.0 367.4 L251.0 368.0 L252.0 368.7 L253.0 369.3 L254.0 369.9 L255.0 370.5 L256.0 371.1 L257.0 371.7 L258.0 372.4 L259.0 373.0 L260.0 373.7 L261.0 374.3 L262.0 375.1 L263.0 375.8 L264.0 376.5 L265.0 377.3 L266.0 378.1 L267.0 378.8 L268.0 379.6 L269.0 380.4 L270.0 381.1 L271.0 381.8 L272.0 382.5 L273.0 383.2 L274.0 383.8 L275.0 384.4 L276.0 385.0 L277.0 385.6 L278.0 386.2 L279.0 386.8 L280.0 387.4 L281.0 388.0 L282.0 388.5 L283.0 389.1 L284.0 389.7 L285.0 390.3 L286.0 390.8 L287.0 391.4 L288.0 392.0 L289.0 392.5 L290.0 393.1 L291.0 393.7 L292.0 394.3 L293.0 394.9 L294.0 395.5 L295.0 396.1 L296.0 396.7 L297.0 397.3 L298.0 397.9 L299.0 398.5 L300.0 399.1 L301.0 399.6 L302.0 400.2 L303.0 400.8 L304.0 401.3 L305.0 401.9 L306.0 402.5 L307.0 403.1 L308.0 403.6 L309.0 404.2 L310.0 404.7 L311.0 405.3 L312.0 405.9 L313.0 406.4 L314.0 407.0 L315.0 407.5 L316.0 408.0 L317.0 408.6 L318.0 409.1 L319.0 409.6 L320.0 410.1 L321.0 410.6 L322.0 411.1 L323.0 411.6 L324.0 412.1 L325.0 412.6 L326.0 413.1 L327.0 413.6 L328.0 414.1 L329.0 414.6 L330.0 415.0 L331.0 415.5 L332.0 416.0 L333.0 416.4 L334.0 416.9 L335.0 417.4 L336.0 417.8 L337.0 418.3 L338.0 418.8 L339.0 419.2 L340.0 419.7 L341.0 420.2 L342.0 420.8 L343.0 421.3 L344.0 421.8 L345.0 422.3 L346.0 422.8 L347.0 423.3 L348.0 423.8 L349.0 424.3 L350.0 424.8 L351.0 425.3 L352.0 425.7 L353.0 426.1 L354.0 426.5 L355.0 426.9 L356.0 427.3 L357.0 427.7 L358.0 428.1 L359.0 428.5 L360.0 428.9 L361.0 429.2 L362.0 429.6 L363.0 430.1 L364.0 430.5 L365.0 430.9 L366.0 431.3 L367.0 431.8 L368.0 432.2 L369.0 432.7 L370.0 433.1 L371.0 433.6 L372.0 434.0 L373.0 434.5 L374.0 434.9 L375.0 435.3 L376.0 435.8 L377.0 436.2 L378.0 436.7 L379.0 437.2 L380.0 437.6 L381.0 438.1 L382.0 438.5 L383.0 439.0 L384.0 439.4 L385.0 439.8 L386.0 440.2 L387.0 440.6 L388.0 441.0 L389.0 441.3 L390.0 441.7 L391.0 442.0 L392.0 442.3 L393.0 442.6 L394.0 442.9 L395.0 443.3 L396.0 443.6 L397.0 443.9 L398.0 444.2 L399.0 444.6 L400.0 445.0 L401.0 445.3 L402.0 445.7 L403.0 446.1 L404.0 446.5 L405.0 446.9 L406.0 447.3 L407.0 447.8 L408.0 448.2 L409.0 448.6 L410.0 449.0 L411.0 449.4 L412.0 449.7 L413.0 450.1 L414.0 450.5 L415.0 450.9 L416.0 451.2 L417.0 451.6 L418.0 452.0 L419.0 452.3 L420.0 452.7 L421.0 453.1 L422.0 453.5 L423.0 453.8 L424.0 454.2 L425.0 454.7 L426.0 455.1 L427.0 455.5 L428.0 455.9 L429.0 456.4 L430.0 456.8 L431.0 457.2 L432.0 457.6 L433.0 458.0 L434.0 458.4 L435.0 458.7 L436.0 459.1 L437.0 459.4 L438.0 459.6 L439.0 459.9 L440.0 460.1 L441.0 460.4 L442.0 460.6 L443.0 460.9 L444.0 461.1 L445.0 461.4 L446.0 461.6 L447.0 461.9 L448.0 462.2 L449.0 462.5 L450.0 462.8 L451.0 463.2 L452.0 463.5 L453.0 463.8 L454.0 464.1 L455.0 464.4 L456.0 464.6 L457.0 464.9 L458.0 465.2 L459.0 465.5 L460.0 465.8 L461.0 466.1 L462.0 466.4 L463.0 466.7 L464.0 467.0 L465.0 467.3 L466.0 467.6 L467.0 467.8 L468.0 468.1 L469.0 468.4 L470.0 468.6 L471.0 468.8 L472.0 469.1 L473.0 469.3 L474.0 469.5 L475.0 469.8 L476.0 470.0 L477.0 470.2 L478.0 470.4 L479.0 470.6 L480.0 470.8 L481.0 471.0 L482.0 471.2 L483.0 471.4 L484.0 471.6 L485.0 471.8 L486.0 472.0 L487.0 472.2 L488.0 472.3 L489.0 472.5 L490.0 472.6 L491.0 472.7 L492.0 472.8 L493.0 473.0 L494.0 473.1 L495.0 473.2 L496.0 473.3 L497.0 473.4 L498.0 473.4 L499.0 473.5 L500.0 473.5 L501.0 473.5 L502.0 473.5 L503.0 473.5 L504.0 473.5 L505.0 473.5 L506.0 473.5 L507.0 473.5 L508.0 473.5 L509.0 473.5 L510.0 473.5 L511.0 473.5 L512.0 473.5 L513.0 473.5 L514.0 473.5 L515.0 473.5 L516.0 473.5 L517.0 473.5 L518.0 473.5 L519.0 473.5 L520.0 473.5 L521.0 473.5 L522.0 473.5 L523.0 473.4 L524.0 473.4 L525.0 473.4 L526.0 473.3 L527.0 473.3 L528.0 473.2 L529.0 473.2 L530.0 473.1 L531.0 473.0 L532.0 473.0 L533.0 472.9 L534.0 472.8 L535.0 472.7 L536.0 472.6 L537.0 472.4 L538.0 472.3 L539.0 472.1 L540.0 472.0 L541.0 471.8 L542.0 471.7 L543.0 471.5 L544.0 471.4 L545.0 471.3 L546.0 471.2 L547.0 471.2 L548.0 471.1 L549.0 471.0 L550.0 470.9 L551.0 470.8 L552.0 470.8 L553.0 470.7 L554.0 470.6 L555.0 470.5 L556.0 470.4 L557.0 470.2 L558.0 470.0 L559.0 469.8 L560.0 469.6 L561.0 469.4 L562.0 469.2 L563.0 469.0 L564.0 468.8 L565.0 468.6 L566.0 468.4 L567.0 468.3 L568.0 468.2 L569.0 468.1 L570.0 468.0 L571.0 467.9 L572.0 467.9 L573.0 467.8 L574.0 467.8 L575.0 467.7 L576.0 467.6 L577.0 467.6 L578.0 467.5 L579.0 467.4 L580.0 467.3 L581.0 467.2 L582.0 467.1 L583.0 467.0 L584.0 466.8 L585.0 466.7 L586.0 466.6 L587.0 466.4 L588.0 466.3 L589.0 466.1 L590.0 466.0 L591.0 465.8 L592.0 465.7 L593.0 465.6 L594.0 465.4 L595.0 465.3 L596.0 465.2 L597.0 465.0 L598.0 464.9 L599.0 464.8 L600.0 464.7 L601.0 464.5 L602.0 464.4 L603.0 464.3 L604.0 464.2 L605.0 464.0 L606.0 463.9 L607.0 463.7 L608.0 463.6 L609.0 463.5 L610.0 463.3 L611.0 463.2 L612.0 463.1 L613.0 463.0 L614.0 462.8 L615.0 462.7 L616.0 462.7 L617.0 462.6 L618.0 462.5 L619.0 462.4 L620.0 462.3 L621.0 462.3 L622.0 462.2 L623.0 462.1 L624.0 462.1 L625.0 462.0 L626.0 461.9 L627.0 461.9 L628.0 461.8 L629.0 461.7 L630.0 461.6 L631.0 461.5 L632.0 461.4 L633.0 461.3 L634.0 461.3 L635.0 461.2 L636.0 461.1 L637.0 461.0 L638.0 461.0 L639.0 461.0 L640.0 461.0 L641.0 461.0 L642.0 461.0 L643.0 461.1 L644.0 461.1 L645.0 461.1 L646.0 461.1 L647.0 461.2 L648.0 461.2 L649.0 461.3 L650.0 461.3 L651.0 461.3 L652.0 461.4 L653.0 461.4 L654.0 461.4 L655.0 461.4 L656.0 461.5 L657.0 461.5 L658.0 461.5 L659.0 461.5 L660.0 461.5 L661.0 461.5 L662.0 461.6 L663.0 461.6 L664.0 461.6 L665.0 461.6 L666.0 461.6 L667.0 461.6 L668.0 461.7 L669.0 461.7 L670.0 461.7 L671.0 461.7 L672.0 461.7 L673.0 461.8 L674.0 461.8 L675.0 461.8 L676.0 461.9 L677.0 461.9 L678.0 461.9 L679.0 462.0 L680.0 462.0 L681.0 462.1 L682.0 462.2 L683.0 462.3 L684.0 462.3 L685.0 462.4 L686.0 462.5 L687.0 462.6 L688.0 462.7 L689.0 462.8 L690.0 463.0 L691.0 463.1 L692.0 463.2 L693.0 463.3 L694.0 463.4 L695.0 463.6 L696.0 463.7 L697.0 463.9 L698.0 464.1 L699.0 464.3 L700.0 464.5 L701.0 464.7 L702.0 464.9 L703.0 465.1 L704.0 465.3 L705.0 465.5 L706.0 465.7 L707.0 465.9 L708.0 466.1 L709.0 466.3 L710.0 466.4 L711.0 466.6 L712.0 466.8 L713.0 467.0 L714.0 467.1 L715.0 467.3 L716.0 467.5 L717.0 467.6 L718.0 467.8 L719.0 468.0 L720.0 468.1 L721.0 468.3 L722.0 468.5 L723.0 468.6 L724.0 468.8 L725.0 469.0 L726.0 469.2 L727.0 469.4 L728.0 469.6 L729.0 469.8 L730.0 470.0 L731.0 470.2 L732.0 470.4 L733.0 470.7 L734.0 470.9 L735.0 471.2 L736.0 471.4 L737.0 471.7 L738.0 472.0 L739.0 472.3 L740.0 472.5 L741.0 472.8 L742.0 473.1 L743.0 473.4 L744.0 473.7 L745.0 474.0 L746.0 474.3 L747.0 474.6 L748.0 474.8 L749.0 475.1 L750.0 475.4 L751.0 475.7 L752.0 476.0 L753.0 476.3 L754.0 476.6 L755.0 476.9 L756.0 477.2 L757.0 477.5 L758.0 477.8 L759.0 478.1 L760.0 478.5 L761.0 478.8 L762.0 479.1 L763.0 479.4 L764.0 479.7 L765.0 480.0 L766.0 480.3 L767.0 480.6 L768.0 480.9 L769.0 481.2 L770.0 481.5 L771.0 481.9 L772.0 482.2 L773.0 482.5 L774.0 482.9 L775.0 483.2 L776.0 483.5 L777.0 483.8 L778.0 484.1 L779.0 484.4 L780.0 484.6 L781.0 484.8 L782.0 485.0 L783.0 485.1 L784.0 485.2 L785.0 485.3 L786.0 485.5 L787.0 485.6 L788.0 485.6 L789.0 485.7 L790.0 485.8 L791.0 485.9 L792.0 485.9 L793.0 486.0 L794.0 486.0 L795.0 486.0 L796.0 486.0 L797.0 486.0 L798.0 485.9 L799.0 485.8 L800.0 485.8 L801.0 485.7 L802.0 485.6 L803.0 485.4 L804.0 485.3 L805.0 485.2 L806.0 485.0 L807.0 484.8 L808.0 484.5 L809.0 484.2 L810.0 483.8 L811.0 483.3 L812.0 482.8 L813.0 482.3 L814.0 481.8 L815.0 481.2 L816.0 480.6 L817.0 480.0 L818.0 479.2 L819.0 478.4 L820.0 477.5 L821.0 476.6 L822.0 475.5 L823.0 474.4 L824.0 473.2 L825.0 471.8 L826.0 470.2 L827.0 468.3 L828.0 466.2 L829.0 463.9 L830.0 461.5 L831.0 458.9 L832.0 456.0 L833.0 452.8 L834.0 449.2 L835.0 445.1 L836.0 440.0 L837.0 434.1 L838.0 427.5" stroke="#00ff00" stroke-dasharray="3 3"/>
<path d="M56.0 259.4 L57.0 259.7 L58.0 260.0 L59.0 260.3 L60.0 260.6 L61.0 260.9 L62.0 261.3 L63.0 261.6 L64.0 261.9 L65.0 262.2 L66.0 262.5 L67.0 262.8 L68.0 263.1 L69.0 263.4 L70.0 263.7 L71.0 264.0 L72.0 264.3 L73.0 264.6 L74.0 264.9 L75.0 265.3 L76.0 265.6 L77.0 265.9 L78.0 266.2 L79.0 266.5 L80.0 266.8 L81.0 267.1 L82.0 267.5 L83.0 267.8 L84.0 268.1 L85.0 268.5 L86.0 268.8 L87.0 269.1 L88.0 269.5 L89.0 269.8 L90.0 270.2 L91.0 270.5 L92.0 270.9 L93.0 271.2 L94.0 271.6 L95.0 272.0 L96.0 272.3 L97.0 272.7 L98.0 273.0 L99.0 273.4 L100.0 273.8 L101.0 274.2 L102.0 274.5 L103.0 274.9 L104.0 275.3 L105.0 275.7 L106.0 276.1 L107.0 276.6 L108.0 277.0 L109.0 277.4 L110.0 277.9 L111.0 278.3 L112.0 278.8 L113.0 279.2 L114.0 279.7 L115.0 280.2 L116.0 280.7 L117.0 281.1 L118.0 281.6 L119.0 282.2 L120.0 282.7 L121.0 283.3 L122.0 283.8 L123.0 284.4 L124.0 284.9 L125.0 285.4 L126.0 285.9 L127.0 286.4 L128.0 286.8 L129.0 287.2 L130.0 287.5 L131.0 287.8 L132.0 288.1 L133.0 288.3 L134.0 288.6 L135.0 288.8 L136.0 289.1 L137.0 289.4 L138.0 289.7 L139.0 290.0 L140.0 290.4 L141.0 290.8 L142.0 291.4 L143.0 292.1 L144.0 292.9 L145.0 293.7 L146.0 294.6 L147.0 295.4 L148.0 296.1 L149.0 296.8 L150.0 297.5 L151.0 298.2 L152.0 298.8 L153.0 299.5 L154.0 300.2 L155.0 300.8 L156.0 301.5 L157.0 302.2 L158.0 302.8 L159.0 303.5 L160.0 304.1 L161.0 304.8 L162.0 305.4 L163.0 306.1 L164.0 306.7 L165.0 307.4 L166.0 308.1 L167.0 308.7 L168.0 309.4 L169.0 310.1 L170.0 310.7 L171.0 311.4 L172.0 312.1 L173.0 312.8 L174.0 313.5 L175.0 314.2 L176.0 314.9 L177.0 315.6 L178.0 316.3 L179.0 317.0 L180.0 317.7 L181.0 318.5 L182.0 319.2 L183.0 319.9 L184.0 320.6 L185.0 321.2 L186.0 321.9 L187.0 322.6 L188.0 323.3 L189.0 323.9 L190.0 324.6 L191.0 325.3 L192.0 326.0 L193.0 326.7 L194.0 327.4 L195.0 328.2 L196.0 329.0 L197.0 329.8 L198.0 330.7 L199.0 331.6 L200.0 332.4 L201.0 333.2 L202.0 334.0 L203.0 334.7 L204.0 335.5 L205.0 336.2 L206.0 337.0 L207.0 337.8 L208.0 338.5 L209.0 339.2 L210.0 340.0 L211.0 340.7 L212.0 341.4 L213.0 342.1 L214.0 342.8 L215.0 343.6 L216.0 344.3 L217.0 345.1 L218.0 345.8 L219.0 346.6 L220.0 347.4 L221.0 348.1 L222.0 348.9 L223.0 349.7 L224.0 350.6 L225.0 351.4 L226.0 352.2 L227.0 353.0 L228.0 353.9 L229.0 354.7 L230.0 355.5 L231.0 356.4 L232.0 357.2 L233.0 358.1 L234.0 358.9 L235.0 359.8 L236.0 360.7 L237.0 361.5 L238.0 362.4 L239.0 363.3 L240.0 364.1 L241.0 365.0 L242.0 365.8 L243.0 366.6 L244.0 367.4 L245.0 368.2 L246.0 368.9 L247.0 369.7 L248.0 370.4 L249.0 371.2 L250.0 371.9 L251.0 372.6 L252.0 373.4 L253.0 374.1 L254.0 374.9 L255.0 375.6 L256.0 376.3 L257.0 377.1 L258.0 377.8 L259.0 378.6 L260.0 379.3 L261.0 380.0 L262.0 380.8 L263.0 381.5 L264.0 382.3 L265.0 383.0 L266.0 383.8 L267.0 384.5 L268.0 385.3 L269.0 386.1 L270.0 386.9 L271.0 387.7 L272.0 388.5 L273.0 389.3 L274.0 390.1 L275.0 391.0 L276.0 391.8 L277.0 392.6 L278.0 393.4 L279.0 394.2 L280.0 395.0 L281.0 395.8 L282.0 396.6 L283.0 397.4 L284.0 398.2 L285.0 399.0 L286.0 399.7 L287.0 400.5 L288.0 401.2 L289.0 401.9 L290.0 402.6 L291.0 403.2 L292.0 403.9 L293.0 404.4 L294.0 405.0 L295.0 405.6 L296.0 406.1 L297.0 406.7 L298.0 407.3 L299.0 407.9 L300.0 408.4 L301.0 409.0 L302.0 409.5 L303.0 410.1 L304.0 410.8 L305.0 411.5 L306.0 412.2 L307.0 412.9 L308.0 413.6 L309.0 414.4 L310.0 415.1 L311.0 415.9 L312.0 416.7 L313.0 417.5 L314.0 418.2 L315.0 419.0 L316.0 419.7 L317.0 420.4 L318.0 421.2 L319.0 421.9 L320.0 422.7 L321.0 423.4 L322.0 424.2 L323.0 424.9 L324.0 425.6 L325.0 426.3 L326.0 427.0 L327.0 427.7 L328.0 428.4 L329.0 429.0 L330.0 429.6 L331.0 430.2 L332.0 430.8 L333.0 431.4 L334.0 432.0 L335.0 432.5 L336.0 433.1 L337.0 433.7 L338.0 434.4 L339.0 435.0 L340.0 435.6 L341.0 436.3 L342.0 437.0 L343.0 437.7 L344.0 438.4 L345.0 439.1 L346.0 439.8 L347.0 440.4 L348.0 441.1 L349.0 441.8 L350.0 442.4 L351.0 443.0 L352.0 443.6 L353.0 444.1 L354.0 444.7 L355.0 445.2 L356.0 445.8 L357.0 446.3 L358.0 446.8 L359.0 447.3 L360.0 447.9 L361.0 448.4 L362.0 449.0 L363.0 449.5 L364.0 450.1 L365.0 450.7 L366.0 451.3 L367.0 451.9 L368.0 452.5 L369.0 453.1 L370.0 453.8 L371.0 454.4 L372.0 455.0 L373.0 455.6 L374.0 456.2 L375.0 456.9 L376.0 457.5 L377.0 458.1 L378.0 458.7 L379.0 459.4 L380.0 460.0 L381.0 460.7 L382.0 461.3 L383.0 461.9 L384.0 462.6 L385.0 463.2 L386.0 463.8 L387.0 464.4 L388.0 465.0 L389.0 465.6 L390.0 466.2 L391.0 466.8 L392.0 467.3 L393.0 467.9 L394.0 468.5 L395.0 469.0 L396.0 469.6 L397.0 470.2 L398.0 470.7 L399.0 471.2 L400.0 471.8 L401.0 472.3 L402.0 472.8 L403.0 473.3 L404.0 473.8 L405.0 474.3 L406.0 474.8 L407.0 475.3 L408.0 475.8 L409.0 476.3 L410.0 476.8 L411.0 477.3 L412.0 477.9 L413.0 478.4 L414.0 478.9 L415.0 479.5 L416.0 480.0 L417.0 480.6 L418.0 481.1 L419.0 481.6 L420.0 482.2 L421.0 482.7 L422.0 483.2 L423.0 483.8 L424.0 484.3 L425.0 484.8 L426.0 485.3 L427.0 485.8 L428.0 486.3 L429.0 486.8 L430.0 487.3 L431.0 487.8 L432.0 488.3 L433.0 488.8 L434.0 489.3 L435.0 489.8 L436.0 490.2 L437.0 490.7 L438.0 491.2 L439.0 491.6 L440.0 492.1 L441.0 492.5 L442.0 493.0 L443.0 493.4 L444.0 493.8 L445.0 494.2 L446.0 494.6 L447.0 494.9 L448.0 495.2 L449.0 495.5 L450.0 495.7 L451.0 495.9 L452.0 496.2 L453.0 496.5 L454.0 496.7 L455.0 497.0 L456.0 497.3 L457.0 497.6 L458.0 497.9 L459.0 498.2 L460.0 498.5 L461.0 498.7 L462.0 499.0 L463.0 499.2 L464.0 499.5 L465.0 499.7 L466.0 500.0 L467.0 500.3 L468.0 500.6 L469.0 500.8 L470.0 501.1 L471.0 501.4 L472.0 501.7 L473.0 501.9 L474.0 502.1 L475.0 502.3 L476.0 502.4 L477.0 502.4 L478.0 502.4 L479.0 502.5 L480.0 502.5 L481.0 502.5 L482.0 502.5 L483.0 502.5 L484.0 502.6 L485.0 502.6 L486.0 502.6 L487.0 502.6 L488.0 502.6 L489.0 502.6 L490.0 502.6 L491.0 502.6 L492.0 502.6 L493.0 502.6 L494.0 502.6 L495.0 502.6 L496.0 502.5 L497.0 502.5 L498.0 502.5 L499.0 502.5 L500.0 502.4 L501.0 502.4 L502.0 502.4 L503.0 502.4 L504.0 502.3 L505.0 502.2 L506.0 502.1 L507.0 502.0 L508.0 501.9 L509.0 501.8 L510.0 501.7 L511.0 501.6 L512.0 501.4 L513.0 501.3 L514.0 501.1 L515.0 500.9 L516.0 500.7 L517.0 500.5 L518.0 500.2 L519.0 500.0 L520.0 499.7 L521.0 499.4 L522.0 499.1 L523.0 498.8 L524.0 498.6 L525.0 498.3 L526.0 498.1 L527.0 497.8 L528.0 497.6 L529.0 497.4 L530.0 497.1 L531.0 496.9 L532.0 496.6 L533.0 496.4 L534.0 496.2 L535.0 495.9 L536.0 495.7 L537.0 495.5 L538.0 495.3 L539.0 495.1 L540.0 494.9 L541.0 494.8 L542.0 494.6 L543.0 494.4 L544.0 494.1 L545.0 493.8 L546.0 493.4 L547.0 493.1 L548.0 492.7 L549.0 492.4 L550.0 492.1 L551.0 491.8 L552.0 491.4 L553.0 491.1 L554.0 490.8 L555.0 490.5 L556.0 490.1 L557.0 489.8 L558.0 489.4 L559.0 489.1 L560.0 488.7 L561.0 488.4 L562.0 488.0 L563.0 487.7 L564.0 487.4 L565.0 487.0 L566.0 486.7 L567.0 486.4 L568.0 486.2 L569.0 485.9 L570.0 485.7 L571.0 485.4 L572.0 485.2 L573.0 485.0 L574.0 484.8 L575.0 484.6 L576.0 484.3 L577.0 484.1 L578.0 483.8 L579.0 483.6 L580.0 483.3 L581.0 483.0 L582.0 482.7 L583.0 482.3 L584.0 482.0 L585.0 481.6 L586.0 481.3 L587.0 480.9 L588.0 480.5 L589.0 480.2 L590.0 479.9 L591.0 479.5 L592.0 479.2 L593.0 478.9 L594.0 478.6 L595.0 478.3 L596.0 478.0 L597.0 477.8 L598.0 477.5 L599.0 477.2 L600.0 476.9 L601.0 476.6 L602.0 476.4 L603.0 476.1 L604.0 475.8 L605.0 475.5 L606.0 475.2 L607.0 474.9 L608.0 474.6 L609.0 474.3 L610.0 474.0 L611.0 473.7 L612.0 473.4 L613.0 473.1 L614.0 472.9 L615.0 472.6 L616.0 472.4 L617.0 472.2 L618.0 472.0 L619.0 471.8 L620.0 471.6 L621.0 471.4 L622.0 471.2 L623.0 471.0 L624.0 470.8 L625.0 470.6 L626.0 470.5 L627.0 470.3 L628.0 470.1 L629.0 469.9 L630.0 469.7 L631.0 469.5 L632.0 469.4 L633.0 469.2 L634.0 469.0 L635.0 468.8 L636.0 468.7 L637.0 468.5 L638.0 468.3 L639.0 468.2 L640.0 468.1 L641.0 467.9 L642.0 467.8 L643.0 467.7 L644.0 467.6 L645.0 467.5 L646.0 467.4 L647.0 467.3 L648.0 467.2 L649.0 467.2 L650.0 467.1 L651.0 467.0 L652.0 467.0 L653.0 466.9 L654.0 466.9 L655.0 466.8 L656.0 466.8 L657.0 466.7 L658.0 466.7 L659.0 466.6 L660.0 466.6 L661.0 466.5 L662.0 466.5 L663.0 466.4 L664.0 466.4 L665.0 466.3 L666.0 466.2 L667.0 466.2 L668.0 466.1 L669.0 466.1 L670.0 466.0 L671.0 466.0 L672.0 465.9 L673.0 465.9 L674.0 465.8 L675.0 465.8 L676.0 465.8 L677.0 465.8 L678.0 465.8 L679.0 465.8 L680.0 465.8 L681.0 465.8 L682.0 465.8 L683.0 465.8 L684.0 465.8 L685.0 465.8 L686.0 465.8 L687.0 465.8 L688.0 465.8 L689.0 465.8 L690.0 465.8 L691.0 465.8 L692.0 465.8 L693.0 465.8 L694.0 465.8 L695.0 465.9 L696.0 465.9 L697.0 466.0 L698.0 466.1 L699.0 466.2 L700.0 466.3 L701.0 466.5 L702.0 466.6 L703.0 466.7 L704.0 466.9 L705.0 467.0 L706.0 467.1 L707.0 467.2 L708.0 467.3 L709.0 467.4 L710.0 467.5 L711.0 467.6 L712.0 467.7 L713.0 467.7 L714.0 467.8 L715.0 467.9 L716.0 467.9 L717.0 468.0 L718.0 468.0 L719.0 468.1 L720.0 468.2 L721.0 468.2 L722.0 468.3 L723.0 468.4 L724.0 468.4 L725.0 468.5 L726.0 468.6 L727.0 468.7 L728.0 468.8 L729.0 468.9 L730.0 469.0 L731.0 469.1 L732.0 469.3 L733.0 469.4 L734.0 469.6 L735.0 469.8 L736.0 470.1 L737.0 470.3 L738.0 470.6 L739.0 470.8 L740.0 471.1 L741.0 471.4 L742.0 471.7 L743.0 472.1 L744.0 472.4 L745.0 472.7 L746.0 473.1 L747.0 473.4 L748.0 473.8 L749.0 474.1 L750.0 474.5 L751.0 474.9 L752.0 475.2 L753.0 475.6 L754.0 476.0 L755.0 476.3 L756.0 476.7 L757.0 477.0 L758.0 477.4 L759.0 477.7 L760.0 478.1 L761.0 478.4 L762.0 478.8 L763.0 479.1 L764.0 479.5 L765.0 479.8 L766.0 480.2 L767.0 480.6 L768.0 480.9 L769.0 481.3 L770.0 481.7 L771.0 482.1 L772.0 482.6 L773.0 483.0 L774.0 483.5 L775.0 484.0 L776.0 484.5 L777.0 485.0 L778.0 485.6 L779.0 486.2 L780.0 487.0 L781.0 487.7 L782.0 488.5 L783.0 489.3 L784.0 490.0 L785.0 490.7 L786.0 491.3 L787.0 492.0 L788.0 492.6 L789.0 493.3 L790.0 493.9 L791.0 494.5 L792.0 495.2 L793.0 495.8 L794.0 496.4 L795.0 497.1 L796.0 497.8 L797.0 498.4 L798.0 499.1 L799.0 499.7 L800.0 500.4 L801.0 501.1 L802.0 501.8 L803.0 502.4 L804.0 503.1 L805.0 503.8 L806.0 504.5 L807.0 505.3 L808.0 506.0 L809.0 506.8 L810.0 507.6 L811.0 508.4 L812.0 509.2 L813.0 510.0 L814.0 510.8 L815.0 511.6 L816.0 512.3 L817.0 513.1 L818.0 513.9 L819.0 514.8 L820.0 515.7 L821.0 516.7 L822.0 517.7 L823.0 518.8 L824.0 519.9 L825.0 521.0 L826.0 522.2 L827.0 523.3 L828.0 524.4 L829.0 525.5 L830.0 526.6 L831.0 527.7 L832.0 528.8 L833.0 529.9 L834.0 531.0 L835.0 532.1 L836.0 533.3 L837.0 534.4 L838.0 535.5" stroke="#ff0000" stroke-dasharray="3 3"/>
<path d="M56.0 254.3 L57.0 254.5 L58.0 254.6 L59.0 254.8 L60.0 255.0 L61.0 255.1 L62.0 255.3 L63.0 255.5 L64.0 255.7 L65.0 255.9 L66.0 256.2 L67.0 256.4 L68.0 256.6 L69.0 256.8 L70.0 257.1 L71.0 257.3 L72.0 257.6 L73.0 257.8 L74.0 258.1 L75.0 258.4 L76.0 258.7 L77.0 259.0 L78.0 259.4 L79.0 259.7 L80.0 260.0 L81.0 260.4 L82.0 260.7 L83.0 261.1 L84.0 261.4 L85.0 261.7 L86.0 262.1 L87.0 262.4 L88.0 262.7 L89.0 263.0 L90.0 263.3 L91.0 263.6 L92.0 263.9 L93.0 264.2 L94.0 264.4 L95.0 264.7 L96.0 265.0 L97.0 265.3 L98.0 265.6 L99.0 265.9 L100.0 266.2 L101.0 266.5 L102.0 266.8 L103.0 267.1 L104.0 267.5 L105.0 267.8 L106.0 268.1 L107.0 268.5 L108.0 268.8 L109.0 269.2 L110.0 269.5 L111.0 269.9 L112.0 270.2 L113.0 270.6 L114.0 270.9 L115.0 271.3 L116.0 271.6 L117.0 271.9 L118.0 272.3 L119.0 272.6 L120.0 273.0 L121.0 273.3 L122.0 273.7 L123.0 274.0 L124.0 274.4 L125.0 274.7 L126.0 275.1 L127.0 275.4 L128.0 275.8 L129.0 276.2 L130.0 276.5 L131.0 276.9 L132.0 277.3 L133.0 277.7 L134.0 278.1 L135.0 278.5 L136.0 278.9 L137.0 279.3 L138.0 279.7 L139.0 280.1 L140.0 280.5 L141.0 280.9 L142.0 281.3 L143.0 281.7 L144.0 282.1 L145.0 282.4 L146.0 282.8 L147.0 283.2 L148.0 283.5 L149.0 283.9 L150.0 284.3 L151.0 284.7 L152.0 285.1 L153.0 285.5 L154.0 286.0 L155.0 286.4 L156.0 286.9 L157.0 287.4 L158.0 287.9 L159.0 288.5 L160.0 289.0 L161.0 289.6 L162.0 290.1 L163.0 290.7 L164.0 291.3 L165.0 291.9 L166.0 292.5 L167.0 293.1 L168.0 293.8 L169.0 294.4 L170.0 295.1 L171.0 295.8 L172.0 296.5 L173.0 297.2 L174.0 297.9 L175.0 298.6 L176.0 299.2 L177.0 299.9 L178.0 300.5 L179.0 301.2 L180.0 301.8 L181.0 302.4 L182.0 303.0 L183.0 303.6 L184.0 304.3 L185.0 304.9 L186.0 305.5 L187.0 306.1 L188.0 306.7 L189.0 307.4 L190.0 308.0 L191.0 308.7 L192.0 309.3 L193.0 310.0 L194.0 310.6 L195.0 311.3 L196.0 311.9 L197.0 312.6 L198.0 313.3 L199.0 314.0 L200.0 314.7 L201.0 315.4 L202.0 316.1 L203.0 316.8 L204.0 317.6 L205.0 318.3 L206.0 319.0 L207.0 319.8 L208.0 320.6 L209.0 321.4 L210.0 322.1 L211.0 323.0 L212.0 323.8 L213.0 324.6 L214.0 325.5 L215.0 326.4 L216.0 327.3 L217.0 328.3 L218.0 329.2 L219.0 330.2 L220.0 331.1 L221.0 331.9 L222.0 332.8 L223.0 333.7 L224.0 334.5 L225.0 335.4 L226.0 336.3 L227.0 337.1 L228.0 338.0 L229.0 338.8 L230.0 339.7 L231.0 340.6 L232.0 341.6 L233.0 342.5 L234.0 343.5 L235.0 344.5 L236.0 345.5 L237.0 346.5 L238.0 347.5 L239.0 348.5 L240.0 349.5 L241.0 350.6 L242.0 351.6 L243.0 352.6 L244.0 353.6 L245.0 354.6 L246.0 355.6 L247.0 356.5 L248.0 357.5 L249.0 358.5 L250.0 359.4 L251.0 360.4 L252.0 361.5 L253.0 362.5 L254.0 363.6 L255.0 364.7 L256.0 365.9 L257.0 367.1 L258.0 368.3 L259.0 369.6 L260.0 370.9 L261.0 372.1 L262.0 373.4 L263.0 374.6 L264.0 375.8 L265.0 377.0 L266.0 378.1 L267.0 379.2 L268.0 380.2 L269.0 381.3 L270.0 382.3 L271.0 383.4 L272.0 384.4 L273.0 385.5 L274.0 386.6 L275.0 387.6 L276.0 388.8 L277.0 389.9 L278.0 391.0 L279.0 392.1 L280.0 393.2 L281.0 394.4 L282.0 395.5 L283.0 396.7 L284.0 397.9 L285.0 399.1 L286.0 400.4 L287.0 401.7 L288.0 403.1 L289.0 404.5 L290.0 405.7 L291.0 406.8 L292.0 407.8 L293.0 408.8 L294.0 409.8 L295.0 410.8 L296.0 411.9 L297.0 413.1 L298.0 414.4 L299.0 415.8 L300.0 417.1 L301.0 418.3 L302.0 419.5 L303.0 420.6 L304.0 421.7 L305.0 422.7 L306.0 423.8 L307.0 424.8 L308.0 425.8 L309.0 426.9 L310.0 427.9 L311.0 429.0 L312.0 430.1 L313.0 431.2 L314.0 432.4 L315.0 433.5 L316.0 434.7 L317.0 435.8 L318.0 437.0 L319.0 438.2 L320.0 439.3 L321.0 440.5 L322.0 441.7 L323.0 442.8 L324.0 444.0 L325.0 445.1 L326.0 446.3 L327.0 447.5 L328.0 448.6 L329.0 449.8 L330.0 450.9 L331.0 452.0 L332.0 453.2 L333.0 454.3 L334.0 455.4 L335.0 456.5 L336.0 457.6 L337.0 458.7 L338.0 459.8 L339.0 460.8 L340.0 461.9 L341.0 463.0 L342.0 464.0 L343.0 465.1 L344.0 466.1 L345.0 467.1 L346.0 468.2 L347.0 469.2 L348.0 470.3 L349.0 471.3 L350.0 472.4 L351.0 473.4 L352.0 474.4 L353.0 475.3 L354.0 476.2 L355.0 477.1 L356.0 477.8 L357.0 478.6 L358.0 479.2 L359.0 479.9 L360.0 480.5 L361.0 481.2 L362.0 482.0 L363.0 482.9 L364.0 483.9 L365.0 484.9 L366.0 485.8 L367.0 486.7 L368.0 487.5 L369.0 488.2 L370.0 489.0 L371.0 489.7 L372.0 490.4 L373.0 491.0 L374.0 491.8 L375.0 492.5 L376.0 493.2 L377.0 494.0 L378.0 494.8 L379.0 495.5 L380.0 496.3 L381.0 497.0 L382.0 497.8 L383.0 498.5 L384.0 499.2 L385.0 499.9 L386.0 500.5 L387.0 501.1 L388.0 501.7 L389.0 502.3 L390.0 502.8 L391.0 503.3 L392.0 503.9 L393.0 504.4 L394.0 504.9 L395.0 505.4 L396.0 505.9 L397.0 506.4 L398.0 507.0 L399.0 507.5 L400.0 508.0 L401.0 508.6 L402.0 509.1 L403.0 509.6 L404.0 510.2 L405.0 510.7 L406.0 511.2 L407.0 511.7 L408.0 512.1 L409.0 512.6 L410.0 513.0 L411.0 513.4 L412.0 513.7 L413.0 514.1 L414.0 514.5 L415.0 514.8 L416.0 515.1 L417.0 515.5 L418.0 515.8 L419.0 516.1 L420.0 516.3 L421.0 516.6 L422.0 516.8 L423.0 517.0 L424.0 517.2 L425.0 517.4 L426.0 517.6 L427.0 517.7 L428.0 517.9 L429.0 518.0 L430.0 518.2 L431.0 518.3 L432.0 518.4 L433.0 518.5 L434.0 518.6 L435.0 518.7 L436.0 518.8 L437.0 518.9 L438.0 519.0 L439.0 519.0 L440.0 519.1 L441.0 519.2 L442.0 519.3 L443.0 519.3 L444.0 519.4 L445.0 519.4 L446.0 519.4 L447.0 519.4 L448.0 519.4 L449.0 519.4 L450.0 519.4 L451.0 519.4 L452.0 519.4 L453.0 519.4 L454.0 519.3 L455.0 519.2 L456.0 519.0 L457.0 518.9 L458.0 518.7 L459.0 518.6 L460.0 518.5 L461.0 518.4 L462.0 518.3 L463.0 518.2 L464.0 518.1 L465.0 518.0 L466.0 517.9 L467.0 517.7 L468.0 517.6 L469.0 517.4 L470.0 517.2 L471.0 517.0 L472.0 516.8 L473.0 516.6 L474.0 516.4 L475.0 516.2 L476.0 516.0 L477.0 515.7 L478.0 515.5 L479.0 515.2 L480.0 514.9 L481.0 514.6 L482.0 514.2 L483.0 513.9 L484.0 513.6 L485.0 513.2 L486.0 512.9 L487.0 512.5 L488.0 512.2 L489.0 511.8 L490.0 511.5 L491.0 511.2 L492.0 510.8 L493.0 510.5 L494.0 510.2 L495.0 509.8 L496.0 509.5 L497.0 509.1 L498.0 508.8 L499.0 508.4 L500.0 508.0 L501.0 507.6 L502.0 507.2 L503.0 506.8 L504.0 506.4 L505.0 506.0 L506.0 505.5 L507.0 505.1 L508.0 504.7 L509.0 504.2 L510.0 503.8 L511.0 503.4 L512.0 502.9 L513.0 502.5 L514.0 502.1 L515.0 501.7 L516.0 501.4 L517.0 501.0 L518.0 500.6 L519.0 500.2 L520.0 499.8 L521.0 499.4 L522.0 499.0 L523.0 498.6 L524.0 498.2 L525.0 497.7 L526.0 497.3 L527.0 496.8 L528.0 496.3 L529.0 495.9 L530.0 495.4 L531.0 494.9 L532.0 494.4 L533.0 494.0 L534.0 493.5 L535.0 493.0 L536.0 492.6 L537.0 492.1 L538.0 491.6 L539.0 491.2 L540.0 490.7 L541.0 490.3 L542.0 489.9 L543.0 489.5 L544.0 489.1 L545.0 488.7 L546.0 488.3 L547.0 487.9 L548.0 487.6 L549.0 487.2 L550.0 486.8 L551.0 486.5 L552.0 486.1 L553.0 485.7 L554.0 485.3 L555.0 485.0 L556.0 484.6 L557.0 484.2 L558.0 483.8 L559.0 483.5 L560.0 483.1 L561.0 482.7 L562.0 482.3 L563.0 481.9 L564.0 481.6 L565.0 481.2 L566.0 480.8 L567.0 480.5 L568.0 480.1 L569.0 479.8 L570.0 479.4 L571.0 479.1 L572.0 478.8 L573.0 478.4 L574.0 478.1 L575.0 477.8 L576.0 477.5 L577.0 477.1 L578.0 476.8 L579.0 476.5 L580.0 476.2 L581.0 475.9 L582.0 475.6 L583.0 475.3 L584.0 475.0 L585.0 474.6 L586.0 474.3 L587.0 474.0 L588.0 473.7 L589.0 473.4 L590.0 473.1 L591.0 472.8 L592.0 472.5 L593.0 472.1 L594.0 471.8 L595.0 471.4 L596.0 471.0 L597.0 470.6 L598.0 470.3 L599.0 469.9 L600.0 469.5 L601.0 469.1 L602.0 468.8 L603.0 468.5 L604.0 468.1 L605.0 467.9 L606.0 467.6 L607.0 467.3 L608.0 467.1 L609.0 466.8 L610.0 466.6 L611.0 466.4 L612.0 466.2 L613.0 465.9 L614.0 465.7 L615.0 465.5 L616.0 465.3 L617.0 465.1 L618.0 464.9 L619.0 464.7 L620.0 464.5 L621.0 464.3 L622.0 464.1 L623.0 463.9 L624.0 463.7 L625.0 463.5 L626.0 463.4 L627.0 463.2 L628.0 463.0 L629.0 462.8 L630.0 462.6 L631.0 462.5 L632.0 462.3 L633.0 462.1 L634.0 462.0 L635.0 461.8 L636.0 461.6 L637.0 461.4 L638.0 461.3 L639.0 461.1 L640.0 460.9 L641.0 460.7 L642.0 460.5 L643.0 460.4 L644.0 460.2 L645.0 460.0 L646.0 459.9 L647.0 459.7 L648.0 459.6 L649.0 459.4 L650.0 459.3 L651.0 459.1 L652.0 459.0 L653.0 458.8 L654.0 458.7 L655.0 458.6 L656.0 458.5 L657.0 458.3 L658.0 458.2 L659.0 458.2 L660.0 458.1 L661.0 458.0 L662.0 458.0 L663.0 457.9 L664.0 457.9 L665.0 457.8 L666.0 457.8 L667.0 457.7 L668.0 457.7 L669.0 457.7 L670.0 457.6 L671.0 457.6 L672.0 457.6 L673.0 457.5 L674.0 457.5 L675.0 457.5 L676.0 457.5 L677.0 457.5 L678.0 457.5 L679.0 457.5 L680.0 457.5 L681.0 457.5 L682.0 457.5 L683.0 457.5 L684.0 457.5 L685.0 457.5 L686.0 457.5 L687.0 457.5 L688.0 457.5 L689.0 457.5 L690.0 457.5 L691.0 457.5 L692.0 457.5 L693.0 457.5 L694.0 457.5 L695.0 457.5 L696.0 457.5 L697.0 457.5 L698.0 457.5 L699.0 457.5 L700.0 457.5 L701.0 457.5 L702.0 457.5 L703.0 457.5 L704.0 457.5 L705.0 457.5 L706.0 457.5 L707.0 457.6 L708.0 457.6 L709.0 457.6 L710.0 457.6 L711.0 457.7 L712.0 457.7 L713.0 457.7 L714.0 457.8 L715.0 457.8 L716.0 457.9 L717.0 457.9 L718.0 457.9 L719.0 458.0 L720.0 458.0 L721.0 458.1 L722.0 458.1 L723.0 458.2 L724.0 458.2 L725.0 458.3 L726.0 458.4 L727.0 458.4 L728.0 458.5 L729.0 458.5 L730.0 458.6 L731.0 458.7 L732.0 458.7 L733.0 458.8 L734.0 458.9 L735.0 459.0 L736.0 459.2 L737.0 459.3 L738.0 459.4 L739.0 459.5 L740.0 459.7 L741.0 459.8 L742.0 460.0 L743.0 460.1 L744.0 460.3 L745.0 460.5 L746.0 460.6 L747.0 460.8 L748.0 461.0 L749.0 461.1 L750.0 461.3 L751.0 461.5 L752.0 461.7 L753.0 461.9 L754.0 462.1 L755.0 462.3 L756.0 462.5 L757.0 462.7 L758.0 463.0 L759.0 463.2 L760.0 463.4 L761.0 463.7 L762.0 463.9 L763.0 464.2 L764.0 464.4 L765.0 464.7 L766.0 464.9 L767.0 465.1 L768.0 465.4 L769.0 465.6 L770.0 465.8 L771.0 466.1 L772.0 466.3 L773.0 466.5 L774.0 466.8 L775.0 467.0 L776.0 467.2 L777.0 467.5 L778.0 467.7 L779.0 468.0 L780.0 468.2 L781.0 468.5 L782.0 468.7 L783.0 469.0 L784.0 469.3 L785.0 469.5 L786.0 469.8 L787.0 470.1 L788.0 470.4 L789.0 470.7 L790.0 471.0 L791.0 471.4 L792.0 471.7 L793.0 472.1 L794.0 472.4 L795.0 472.8 L796.0 473.1 L797.0 473.5 L798.0 473.8 L799.0 474.2 L800.0 474.6 L801.0 474.9 L802.0 475.3 L803.0 475.7 L804.0 476.1 L805.0 476.4 L806.0 476.8 L807.0 477.1 L808.0 477.5 L809.0 477.8 L810.0 478.2 L811.0 478.5 L812.0 478.9 L813.0 479.3 L814.0 479.6 L815.0 480.0 L816.0 480.4 L817.0 480.8 L818.0 481.2 L819.0 481.6 L820.0 482.0 L821.0 482.5 L822.0 483.0 L823.0 483.5 L824.0 484.0 L825.0 484.5 L826.0 485.0 L827.0 485.6 L828.0 486.1 L829.0 486.7 L830.0 487.3 L831.0 487.9 L832.0 488.6 L833.0 489.2 L834.0 489.9 L835.0 490.5 L836.0 491.2 L837.0 491.9 L838.0 492.6" stroke="#bf8a00" stroke-dasharray="3 3"/>
<path d="M56.0 184.5 L57.0 184.5 L58.0 184.5 L59.0 184.5 L60.0 184.5 L61.0 184.5 L62.0 184.5 L63.0 184.5 L64.0 184.5 L65.0 184.5 L66.0 184.5 L67.0 184.5 L68.0 184.5 L69.0 184.5 L70.0 184.6 L71.0 184.6 L72.0 184.6 L73.0 184.6 L74.0 184.6 L75.0 184.6 L76.0 184.6 L77.0 184.6 L78.0 184.6 L79.0 184.6 L80.0 184.7 L81.0 184.7 L82.0 184.7 L83.0 184.7 L84.0 184.7 L85.0 184.7 L86.0 184.7 L87.0 184.7 L88.0 184.8 L89.0 184.8 L90.0 184.8 L91.0 184.8 L92.0 184.8 L93.0 184.8 L94.0 184.9 L95.0 184.9 L96.0 184.9 L97.0 184.9 L98.0 184.9 L99.0 184.9 L100.0 185.0 L101.0 185.0 L102.0 185.0 L103.0 185.0 L104.0 185.0 L105.0 185.1 L106.0 185.1 L107.0 185.1 L108.0 185.1 L109.0 185.2 L110.0 185.2 L111.0 185.3 L112.0 185.3 L113.0 185.3 L114.0 185.4 L115.0 185.4 L116.0 185.5 L117.0 185.5 L118.0 185.6 L119.0 185.7 L120.0 185.7 L121.0 185.8 L122.0 185.8 L123.0 185.9 L124.0 186.0 L125.0 186.0 L126.0 186.1 L127.0 186.1 L128.0 186.2 L129.0 186.3 L130.0 186.3 L131.0 186.4 L132.0 186.5 L133.0 186.6 L134.0 186.7 L135.0 186.7 L136.0 186.8 L137.0 186.9 L138.0 187.0 L139.0 187.0 L140.0 187.1 L141.0 187.2 L142.0 187.2 L143.0 187.2 L144.0 187.3 L145.0 187.3 L146.0 187.3 L147.0 187.4 L148.0 187.4 L149.0 187.5 L150.0 187.5 L151.0 187.6 L152.0 187.6 L153.0 187.7 L154.0 188.0 L155.0 188.3 L156.0 188.5 L157.0 188.6 L158.0 188.7 L159.0 188.7 L160.0 188.8 L161.0 188.8 L162.0 188.8 L163.0 188.9 L164.0 188.9 L165.0 188.9 L166.0 189.0 L167.0 189.0 L168.0 189.0 L169.0 189.1 L170.0 189.2 L171.0 189.3 L172.0 189.4 L173.0 189.5 L174.0 189.7 L175.0 189.9 L176.0 190.1 L177.0 190.3 L178.0 190.6 L179.0 190.8 L180.0 191.1 L181.0 191.4 L182.0 191.6 L183.0 191.9 L184.0 192.2 L185.0 192.5 L186.0 192.7 L187.0 193.0 L188.0 193.2 L189.0 193.4 L190.0 193.6 L191.0 193.8 L192.0 194.0 L193.0 194.2 L194.0 194.4 L195.0 194.6 L196.0 194.7 L197.0 194.9 L198.0 195.1 L199.0 195.3 L200.0 195.4 L201.0 195.6 L202.0 195.8 L203.0 196.0 L204.0 196.2 L205.0 196.4 L206.0 196.6 L207.0 196.8 L208.0 197.1 L209.0 197.3 L210.0 197.6 L211.0 197.9 L212.0 198.2 L213.0 198.5 L214.0 198.8 L215.0 199.2 L216.0 199.5 L217.0 199.8 L218.0 200.1 L219.0 200.5 L220.0 200.8 L221.0 201.1 L222.0 201.3 L223.0 201.6 L224.0 201.8 L225.0 202.1 L226.0 202.3 L227.0 202.6 L228.0 202.8 L229.0 203.0 L230.0 203.3 L231.0 203.6 L232.0 203.8 L233.0 204.1 L234.0 204.4 L235.0 204.7 L236.0 205.1 L237.0 205.4 L238.0 205.7 L239.0 206.1 L240.0 206.5 L241.0 206.8 L242.0 207.2 L243.0 207.6 L244.0 208.0 L245.0 208.4 L246.0 208.8 L247.0 209.2 L248.0 209.7 L249.0 210.1 L250.0 210.5 L251.0 210.9 L252.0 211.2 L253.0 211.6 L254.0 211.9 L255.0 212.3 L256.0 212.6 L257.0 212.9 L258.0 213.2 L259.0 213.6 L260.0 213.9 L261.0 214.2 L262.0 214.6 L263.0 215.0 L264.0 215.3 L265.0 215.7 L266.0 216.1 L267.0 216.6 L268.0 217.0 L269.0 217.5 L270.0 218.0 L271.0 218.5 L272.0 219.0 L273.0 219.5 L274.0 220.0 L275.0 220.5 L276.0 221.1 L277.0 221.6 L278.0 222.1 L279.0 222.7 L280.0 223.2 L281.0 223.7 L282.0 224.2 L283.0 224.7 L284.0 225.2 L285.0 225.7 L286.0 226.2 L287.0 226.7 L288.0 227.2 L289.0 227.8 L290.0 228.3 L291.0 228.8 L292.0 229.3 L293.0 229.8 L294.0 230.3 L295.0 230.7 L296.0 231.2 L297.0 231.7 L298.0 232.2 L299.0 232.6 L300.0 233.1 L301.0 233.5 L302.0 233.9 L303.0 234.4 L304.0 234.8 L305.0 235.2 L306.0 235.7 L307.0 236.1 L308.0 236.5 L309.0 237.0 L310.0 237.4 L311.0 237.9 L312.0 238.4 L313.0 238.8 L314.0 239.4 L315.0 239.9 L316.0 240.4 L317.0 240.9 L318.0 241.5 L319.0 242.0 L320.0 242.6 L321.0 243.1 L322.0 243.7 L323.0 244.3 L324.0 244.8 L325.0 245.4 L326.0 246.0 L327.0 246.6 L328.0 247.2 L329.0 247.8 L330.0 248.4 L331.0 249.0 L332.0 249.6 L333.0 250.2 L334.0 250.7 L335.0 251.3 L336.0 251.9 L337.0 252.5 L338.0 253.1 L339.0 253.6 L340.0 254.2 L341.0 254.8 L342.0 255.3 L343.0 255.9 L344.0 256.4 L345.0 257.0 L346.0 257.5 L347.0 258.1 L348.0 258.6 L349.0 259.2 L350.0 259.7 L351.0 260.3 L352.0 260.8 L353.0 261.4 L354.0 261.9 L355.0 262.5 L356.0 263.1 L357.0 263.6 L358.0 264.2 L359.0 264.8 L360.0 265.4 L361.0 266.0 L362.0 266.6 L363.0 267.1 L364.0 267.7 L365.0 268.3 L366.0 268.9 L367.0 269.5 L368.0 270.2 L369.0 270.8 L370.0 271.4 L371.0 272.0 L372.0 272.7 L373.0 273.4 L374.0 274.0 L375.0 274.7 L376.0 275.4 L377.0 276.1 L378.0 276.9 L379.0 277.6 L380.0 278.3 L381.0 279.0 L382.0 279.7 L383.0 280.4 L384.0 281.1 L385.0 281.8 L386.0 282.5 L387.0 283.2 L388.0 283.8 L389.0 284.4 L390.0 285.1 L391.0 285.7 L392.0 286.3 L393.0 286.9 L394.0 287.5 L395.0 288.1 L396.0 288.6 L397.0 289.2 L398.0 289.8 L399.0 290.4 L400.0 291.0 L401.0 291.6 L402.0 292.2 L403.0 292.9 L404.0 293.5 L405.0 294.1 L406.0 294.8 L407.0 295.4 L408.0 296.0 L409.0 296.7 L410.0 297.3 L411.0 298.0 L412.0 298.7 L413.0 299.3 L414.0 300.0 L415.0 300.7 L416.0 301.4 L417.0 302.1 L418.0 302.8 L419.0 303.5 L420.0 304.3 L421.0 305.0 L422.0 305.7 L423.0 306.4 L424.0 307.2 L425.0 307.9 L426.0 308.6 L427.0 309.3 L428.0 310.0 L429.0 310.7 L430.0 311.4 L431.0 312.1 L432.0 312.7 L433.0 313.4 L434.0 314.1 L435.0 314.7 L436.0 315.4 L437.0 316.0 L438.0 316.7 L439.0 317.3 L440.0 317.9 L441.0 318.6 L442.0 319.2 L443.0 319.9 L444.0 320.6 L445.0 321.2 L446.0 321.9 L447.0 322.6 L448.0 323.3 L449.0 324.0 L450.0 324.7 L451.0 325.4 L452.0 326.1 L453.0 326.8 L454.0 327.5 L455.0 328.2 L456.0 328.9 L457.0 329.6 L458.0 330.3 L459.0 331.0 L460.0 331.7 L461.0 332.4 L462.0 333.1 L463.0 333.8 L464.0 334.5 L465.0 335.2 L466.0 335.9 L467.0 336.6 L468.0 337.3 L469.0 337.9 L470.0 338.6 L471.0 339.3 L472.0 340.0 L473.0 340.7 L474.0 341.4 L475.0 342.1 L476.0 342.8 L477.0 343.6 L478.0 344.3 L479.0 345.0 L480.0 345.7 L481.0 346.5 L482.0 347.2 L483.0 348.0 L484.0 348.7 L485.0 349.5 L486.0 350.2 L487.0 351.0 L488.0 351.7 L489.0 352.5 L490.0 353.3 L491.0 354.0 L492.0 354.8 L493.0 355.6 L494.0 356.4 L495.0 357.1 L496.0 357.9 L497.0 358.7 L498.0 359.5 L499.0 360.2 L500.0 361.0 L501.0 361.8 L502.0 362.6 L503.0 363.4 L504.0 364.2 L505.0 365.0 L506.0 365.8 L507.0 366.7 L508.0 367.5 L509.0 368.3 L510.0 369.2 L511.0 370.1 L512.0 371.0 L513.0 371.9 L514.0 372.8 L515.0 373.7 L516.0 374.6 L517.0 375.5 L518.0 376.4 L519.0 377.3 L520.0 378.1 L521.0 378.9 L522.0 379.7 L523.0 380.5 L524.0 381.3 L525.0 382.1 L526.0 382.8 L527.0 383.6 L528.0 384.3 L529.0 385.1 L530.0 385.8 L531.0 386.6 L532.0 387.3 L533.0 388.0 L534.0 388.7 L535.0 389.4 L536.0 390.1 L537.0 390.8 L538.0 391.5 L539.0 392.1 L540.0 392.8 L541.0 393.4 L542.0 394.0 L543.0 394.7 L544.0 395.3 L545.0 395.9 L546.0 396.5 L547.0 397.2 L548.0 397.8 L549.0 398.5 L550.0 399.1 L551.0 399.8 L552.0 400.5 L553.0 401.2 L554.0 401.9 L555.0 402.7 L556.0 403.4 L557.0 404.1 L558.0 404.9 L559.0 405.6 L560.0 406.4 L561.0 407.1 L562.0 407.9 L563.0 408.7 L564.0 409.4 L565.0 410.2 L566.0 411.0 L567.0 411.7 L568.0 412.5 L569.0 413.3 L570.0 414.1 L571.0 415.0 L572.0 415.8 L573.0 416.6 L574.0 417.5 L575.0 418.3 L576.0 419.2 L577.0 420.0 L578.0 420.8 L579.0 421.6 L580.0 422.4 L581.0 423.1 L582.0 423.9 L583.0 424.6 L584.0 425.2 L585.0 425.9 L586.0 426.5 L587.0 427.2 L588.0 427.8 L589.0 428.4 L590.0 429.0 L591.0 429.6 L592.0 430.1 L593.0 430.7 L594.0 431.3 L595.0 431.9 L596.0 432.4 L597.0 433.0 L598.0 433.6 L599.0 434.1 L600.0 434.7 L601.0 435.2 L602.0 435.8 L603.0 436.4 L604.0 437.0 L605.0 437.6 L606.0 438.3 L607.0 439.0 L608.0 439.7 L609.0 440.4 L610.0 441.1 L611.0 441.8 L612.0 442.5 L613.0 443.2 L614.0 443.9 L615.0 444.6 L616.0 445.2 L617.0 445.9 L618.0 446.6 L619.0 447.2 L620.0 447.9 L621.0 448.6 L622.0 449.2 L623.0 449.9 L624.0 450.5 L625.0 451.2 L626.0 451.9 L627.0 452.5 L628.0 453.1 L629.0 453.8 L630.0 454.4 L631.0 455.0 L632.0 455.6 L633.0 456.2 L634.0 456.9 L635.0 457.5 L636.0 458.1 L637.0 458.6 L638.0 459.2 L639.0 459.8 L640.0 460.4 L641.0 461.0 L642.0 461.6 L643.0 462.2 L644.0 462.8 L645.0 463.4 L646.0 464.0 L647.0 464.6 L648.0 465.2 L649.0 465.8 L650.0 466.4 L651.0 467.0 L652.0 467.6 L653.0 468.2 L654.0 468.8 L655.0 469.4 L656.0 470.0 L657.0 470.6 L658.0 471.2 L659.0 471.8 L660.0 472.4 L661.0 473.0 L662.0 473.6 L663.0 474.2 L664.0 474.8 L665.0 475.3 L666.0 475.9 L667.0 476.5 L668.0 477.1 L669.0 477.7 L670.0 478.3 L671.0 478.9 L672.0 479.5 L673.0 480.1 L674.0 480.7 L675.0 481.3 L676.0 482.0 L677.0 482.6 L678.0 483.2 L679.0 483.8 L680.0 484.5 L681.0 485.1 L682.0 485.8 L683.0 486.4 L684.0 487.1 L685.0 487.7 L686.0 488.4 L687.0 489.0 L688.0 489.7 L689.0 490.3 L690.0 491.0 L691.0 491.7 L692.0 492.3 L693.0 493.0 L694.0 493.6 L695.0 494.3 L696.0 494.9 L697.0 495.6 L698.0 496.2 L699.0 496.8 L700.0 497.5 L701.0 498.1 L702.0 498.8 L703.0 499.4 L704.0 500.1 L705.0 500.7 L706.0 501.4 L707.0 502.0 L708.0 502.7 L709.0 503.4 L710.0 504.0 L711.0 504.7 L712.0 505.3 L713.0 506.0 L714.0 506.7 L715.0 507.3 L716.0 508.0 L717.0 508.6 L718.0 509.3 L719.0 510.0 L720.0 510.6 L721.0 511.3 L722.0 512.0 L723.0 512.7 L724.0 513.4 L725.0 514.1 L726.0 514.8 L727.0 515.5 L728.0 516.2 L729.0 517.0 L730.0 517.7 L731.0 518.5 L732.0 519.2 L733.0 520.0 L734.0 520.8 L735.0 521.7 L736.0 522.5 L737.0 523.3 L738.0 524.2 L739.0 525.0 L740.0 525.8 L741.0 526.6 L742.0 527.4 L743.0 528.2 L744.0 529.1 L745.0 529.9 L746.0 530.7 L747.0 531.5 L748.0 532.3 L749.0 533.2 L750.0 534.0 L751.0 534.8 L752.0 535.6 L753.0 536.5 L754.0 537.3 L755.0 538.1 L756.0 539.0 L757.0 539.8 L758.0 540.6 L759.0 541.4 L760.0 542.3 L761.0 543.1 L762.0 543.9 L763.0 544.7 L764.0 545.6 L765.0 546.4 L766.0 547.3 L767.0 548.1 L768.0 549.0 L769.0 549.9 L770.0 550.8 L771.0 551.7 L772.0 552.7 L773.0 553.6 L774.0 554.6 L775.0 555.6 L776.0 556.6 L777.0 557.6 L778.0 558.6 L779.0 559.6 L780.0 560.7 L781.0 561.7 L782.0 562.8 L783.0 563.9 L784.0 565.0 L785.0 566.1 L786.0 567.2 L787.0 568.4 L788.0 569.5 L789.0 570.7 L790.0 571.9 L791.0 573.2 L792.0 574.4 L793.0 575.7 L794.0 577.0 L795.0 578.3 L796.0 579.6 L797.0 581.0 L797.4 581.0" stroke="#00ff00"/>
<path d="M56.0 144.4 L57.0 144.4 L58.0 144.4 L59.0 144.4 L60.0 144.4 L61.0 144.4 L62.0 144.5 L63.0 144.5 L64.0 144.5 L65.0 144.5 L66.0 144.5 L67.0 144.5 L68.0 144.5 L69.0 144.5 L70.0 144.5 L71.0 144.5 L72.0 144.5 L73.0 144.6 L74.0 144.6 L75.0 144.6 L76.0 144.6 L77.0 144.6 L78.0 144.6 L79.0 144.6 L80.0 144.6 L81.0 144.6 L82.0 144.6 L83.0 144.7 L84.0 144.7 L85.0 144.7 L86.0 144.7 L87.0 144.7 L88.0 144.7 L89.0 144.7 L90.0 144.7 L91.0 144.7 L92.0 144.8 L93.0 144.8 L94.0 144.8 L95.0 144.8 L96.0 144.8 L97.0 144.8 L98.0 144.8 L99.0 144.8 L100.0 144.8 L101.0 144.9 L102.0 144.9 L103.0 144.9 L104.0 144.9 L105.0 144.9 L106.0 144.9 L107.0 144.9 L108.0 144.9 L109.0 144.9 L110.0 145.0 L111.0 145.0 L112.0 145.0 L113.0 145.0 L114.0 145.0 L115.0 145.0 L116.0 145.0 L117.0 145.0 L118.0 145.0 L119.0 145.0 L120.0 145.0 L121.0 145.0 L122.0 145.0 L123.0 145.1 L124.0 145.1 L125.0 145.1 L126.0 145.1 L127.0 145.1 L128.0 145.1 L129.0 145.1 L130.0 145.1 L131.0 145.1 L132.0 145.1 L133.0 145.1 L134.0 145.1 L135.0 145.1 L136.0 145.2 L137.0 145.2 L138.0 145.2 L139.0 145.2 L140.0 145.2 L141.0 145.2 L142.0 145.2 L143.0 145.3 L144.0 145.3 L145.0 145.3 L146.0 145.3 L147.0 145.3 L148.0 145.4 L149.0 145.4 L150.0 145.4 L151.0 145.4 L152.0 145.5 L153.0 145.5 L154.0 145.8 L155.0 146.3 L156.0 146.5 L157.0 146.5 L158.0 146.6 L159.0 146.6 L160.0 146.6 L161.0 146.6 L162.0 146.7 L163.0 146.7 L164.0 146.7 L165.0 146.7 L166.0 146.7 L167.0 146.7 L168.0 146.7 L169.0 146.7 L170.0 146.8 L171.0 146.8 L172.0 146.8 L173.0 146.8 L174.0 146.9 L175.0 146.9 L176.0 147.0 L177.0 147.0 L178.0 147.1 L179.0 147.2 L180.0 147.2 L181.0 147.3 L182.0 147.4 L183.0 147.5 L184.0 147.6 L185.0 147.7 L186.0 147.8 L187.0 147.8 L188.0 147.9 L189.0 148.0 L190.0 148.1 L191.0 148.2 L192.0 148.3 L193.0 148.4 L194.0 148.5 L195.0 148.7 L196.0 148.8 L197.0 148.9 L198.0 149.0 L199.0 149.2 L200.0 149.3 L201.0 149.4 L202.0 149.5 L203.0 149.7 L204.0 149.8 L205.0 149.9 L206.0 150.0 L207.0 150.2 L208.0 150.3 L209.0 150.4 L210.0 150.5 L211.0 150.6 L212.0 150.7 L213.0 150.8 L214.0 150.9 L215.0 151.1 L216.0 151.2 L217.0 151.3 L218.0 151.4 L219.0 151.5 L220.0 151.7 L221.0 151.8 L222.0 152.0 L223.0 152.1 L224.0 152.3 L225.0 152.5 L226.0 152.7 L227.0 152.9 L228.0 153.1 L229.0 153.3 L230.0 153.5 L231.0 153.7 L232.0 153.9 L233.0 154.1 L234.0 154.4 L235.0 154.6 L236.0 154.8 L237.0 155.1 L238.0 155.3 L239.0 155.6 L240.0 155.9 L241.0 156.1 L242.0 156.4 L243.0 156.7 L244.0 156.9 L245.0 157.2 L246.0 157.4 L247.0 157.7 L248.0 157.9 L249.0 158.2 L250.0 158.4 L251.0 158.6 L252.0 158.9 L253.0 159.1 L254.0 159.3 L255.0 159.6 L256.0 159.8 L257.0 160.0 L258.0 160.2 L259.0 160.5 L260.0 160.7 L261.0 161.0 L262.0 161.2 L263.0 161.5 L264.0 161.8 L265.0 162.1 L266.0 162.4 L267.0 162.8 L268.0 163.1 L269.0 163.6 L270.0 164.0 L271.0 164.5 L272.0 164.9 L273.0 165.4 L274.0 166.0 L275.0 166.5 L276.0 167.0 L277.0 167.5 L278.0 168.0 L279.0 168.5 L280.0 169.0 L281.0 169.5 L282.0 170.0 L283.0 170.4 L284.0 170.9 L285.0 171.4 L286.0 171.8 L287.0 172.3 L288.0 172.7 L289.0 173.2 L290.0 173.6 L291.0 174.1 L292.0 174.6 L293.0 175.0 L294.0 175.5 L295.0 176.0 L296.0 176.4 L297.0 176.9 L298.0 177.4 L299.0 177.9 L300.0 178.4 L301.0 178.9 L302.0 179.4 L303.0 179.9 L304.0 180.4 L305.0 180.9 L306.0 181.4 L307.0 181.9 L308.0 182.4 L309.0 182.9 L310.0 183.5 L311.0 184.0 L312.0 184.5 L313.0 185.0 L314.0 185.5 L315.0 186.0 L316.0 186.5 L317.0 187.1 L318.0 187.6 L319.0 188.2 L320.0 188.8 L321.0 189.4 L322.0 190.1 L323.0 190.8 L324.0 191.5 L325.0 192.2 L326.0 193.0 L327.0 193.7 L328.0 194.5 L329.0 195.3 L330.0 196.1 L331.0 196.9 L332.0 197.7 L333.0 198.5 L334.0 199.2 L335.0 200.0 L336.0 200.8 L337.0 201.6 L338.0 202.3 L339.0 203.1 L340.0 203.9 L341.0 204.7 L342.0 205.5 L343.0 206.3 L344.0 207.1 L345.0 207.9 L346.0 208.6 L347.0 209.4 L348.0 210.2 L349.0 211.0 L350.0 211.8 L351.0 212.7 L352.0 213.5 L353.0 214.3 L354.0 215.1 L355.0 215.9 L356.0 216.7 L357.0 217.6 L358.0 218.4 L359.0 219.2 L360.0 220.1 L361.0 220.9 L362.0 221.7 L363.0 222.6 L364.0 223.4 L365.0 224.3 L366.0 225.1 L367.0 226.0 L368.0 226.8 L369.0 227.7 L370.0 228.6 L371.0 229.5 L372.0 230.5 L373.0 231.4 L374.0 232.4 L375.0 233.3 L376.0 234.3 L377.0 235.3 L378.0 236.3 L379.0 237.3 L380.0 238.4 L381.0 239.4 L382.0 240.4 L383.0 241.4 L384.0 242.4 L385.0 243.4 L386.0 244.4 L387.0 245.4 L388.0 246.4 L389.0 247.3 L390.0 248.3 L391.0 249.3 L392.0 250.2 L393.0 251.2 L394.0 252.1 L395.0 253.0 L396.0 254.0 L397.0 254.9 L398.0 255.9 L399.0 256.8 L400.0 257.8 L401.0 258.7 L402.0 259.6 L403.0 260.6 L404.0 261.5 L405.0 262.5 L406.0 263.4 L407.0 264.4 L408.0 265.3 L409.0 266.2 L410.0 267.2 L411.0 268.1 L412.0 269.0 L413.0 270.0 L414.0 271.0 L415.0 271.9 L416.0 272.9 L417.0 273.9 L418.0 274.9 L419.0 275.9 L420.0 277.0 L421.0 278.0 L422.0 279.2 L423.0 280.3 L424.0 281.4 L425.0 282.5 L426.0 283.7 L427.0 284.8 L428.0 285.8 L429.0 286.9 L430.0 287.9 L431.0 288.9 L432.0 289.8 L433.0 290.8 L434.0 291.7 L435.0 292.6 L436.0 293.5 L437.0 294.3 L438.0 295.2 L439.0 296.1 L440.0 296.9 L441.0 297.8 L442.0 298.7 L443.0 299.6 L444.0 300.5 L445.0 301.4 L446.0 302.3 L447.0 303.2 L448.0 304.1 L449.0 305.1 L450.0 306.0 L451.0 307.0 L452.0 307.9 L453.0 308.9 L454.0 309.8 L455.0 310.8 L456.0 311.8 L457.0 312.7 L458.0 313.7 L459.0 314.7 L460.0 315.6 L461.0 316.6 L462.0 317.6 L463.0 318.6 L464.0 319.6 L465.0 320.6 L466.0 321.6 L467.0 322.6 L468.0 323.6 L469.0 324.7 L470.0 325.7 L471.0 326.7 L472.0 327.7 L473.0 328.7 L474.0 329.7 L475.0 330.6 L476.0 331.6 L477.0 332.5 L478.0 333.4 L479.0 334.3 L480.0 335.2 L481.0 336.0 L482.0 336.9 L483.0 337.7 L484.0 338.6 L485.0 339.4 L486.0 340.2 L487.0 341.0 L488.0 341.9 L489.0 342.7 L490.0 343.5 L491.0 344.4 L492.0 345.2 L493.0 346.1 L494.0 347.0 L495.0 347.8 L496.0 348.7 L497.0 349.6 L498.0 350.5 L499.0 351.4 L500.0 352.3 L501.0 353.2 L502.0 354.1 L503.0 355.0 L504.0 356.0 L505.0 356.9 L506.0 357.8 L507.0 358.7 L508.0 359.6 L509.0 360.6 L510.0 361.5 L511.0 362.5 L512.0 363.5 L513.0 364.5 L514.0 365.5 L515.0 366.5 L516.0 367.4 L517.0 368.4 L518.0 369.3 L519.0 370.2 L520.0 371.0 L521.0 371.8 L522.0 372.6 L523.0 373.3 L524.0 374.0 L525.0 374.7 L526.0 375.4 L527.0 376.1 L528.0 376.8 L529.0 377.4 L530.0 378.1 L531.0 378.8 L532.0 379.4 L533.0 380.1 L534.0 380.8 L535.0 381.5 L536.0 382.2 L537.0 382.9 L538.0 383.7 L539.0 384.4 L540.0 385.2 L541.0 385.9 L542.0 386.7 L543.0 387.4 L544.0 388.2 L545.0 389.0 L546.0 389.7 L547.0 390.5 L548.0 391.2 L549.0 392.0 L550.0 392.7 L551.0 393.5 L552.0 394.2 L553.0 395.0 L554.0 395.7 L555.0 396.5 L556.0 397.2 L557.0 398.0 L558.0 398.7 L559.0 399.5 L560.0 400.2 L561.0 401.0 L562.0 401.7 L563.0 402.5 L564.0 403.2 L565.0 404.0 L566.0 404.7 L567.0 405.5 L568.0 406.2 L569.0 407.0 L570.0 407.7 L571.0 408.5 L572.0 409.3 L573.0 410.1 L574.0 410.8 L575.0 411.6 L576.0 412.4 L577.0 413.2 L578.0 413.9 L579.0 414.7 L580.0 415.4 L581.0 416.1 L582.0 416.8 L583.0 417.5 L584.0 418.1 L585.0 418.8 L586.0 419.4 L587.0 420.0 L588.0 420.6 L589.0 421.2 L590.0 421.8 L591.0 422.4 L592.0 422.9 L593.0 423.5 L594.0 424.1 L595.0 424.7 L596.0 425.3 L597.0 425.8 L598.0 426.4 L599.0 427.0 L600.0 427.6 L601.0 428.2 L602.0 428.8 L603.0 429.4 L604.0 430.0 L605.0 430.6 L606.0 431.2 L607.0 431.8 L608.0 432.5 L609.0 433.1 L610.0 433.7 L611.0 434.3 L612.0 434.9 L613.0 435.5 L614.0 436.1 L615.0 436.8 L616.0 437.4 L617.0 438.1 L618.0 438.7 L619.0 439.4 L620.0 440.1 L621.0 440.8 L622.0 441.4 L623.0 442.1 L624.0 442.8 L625.0 443.5 L626.0 444.2 L627.0 444.8 L628.0 445.5 L629.0 446.1 L630.0 446.7 L631.0 447.3 L632.0 447.9 L633.0 448.5 L634.0 449.1 L635.0 449.7 L636.0 450.3 L637.0 450.9 L638.0 451.4 L639.0 452.0 L640.0 452.6 L641.0 453.2 L642.0 453.7 L643.0 454.3 L644.0 454.9 L645.0 455.5 L646.0 456.1 L647.0 456.7 L648.0 457.3 L649.0 457.9 L650.0 458.5 L651.0 459.1 L652.0 459.7 L653.0 460.3 L654.0 460.9 L655.0 461.5 L656.0 462.1 L657.0 462.7 L658.0 463.3 L659.0 463.9 L660.0 464.5 L661.0 465.2 L662.0 465.8 L663.0 466.4 L664.0 467.0 L665.0 467.7 L666.0 468.3 L667.0 469.0 L668.0 469.7 L669.0 470.3 L670.0 471.0 L671.0 471.6 L672.0 472.3 L673.0 472.9 L674.0 473.6 L675.0 474.2 L676.0 474.8 L677.0 475.5 L678.0 476.1 L679.0 476.7 L680.0 477.3 L681.0 477.9 L682.0 478.5 L683.0 479.2 L684.0 479.8 L685.0 480.4 L686.0 481.0 L687.0 481.6 L688.0 482.1 L689.0 482.7 L690.0 483.3 L691.0 483.9 L692.0 484.5 L693.0 485.1 L694.0 485.6 L695.0 486.2 L696.0 486.8 L697.0 487.3 L698.0 487.9 L699.0 488.4 L700.0 489.0 L701.0 489.5 L702.0 490.1 L703.0 490.6 L704.0 491.2 L705.0 491.7 L706.0 492.3 L707.0 492.8 L708.0 493.4 L709.0 493.9 L710.0 494.5 L711.0 495.0 L712.0 495.6 L713.0 496.1 L714.0 496.7 L715.0 497.2 L716.0 497.8 L717.0 498.3 L718.0 498.9 L719.0 499.4 L720.0 500.0 L721.0 500.5 L722.0 501.1 L723.0 501.6 L724.0 502.2 L725.0 502.7 L726.0 503.3 L727.0 503.8 L728.0 504.4 L729.0 504.9 L730.0 505.5 L731.0 506.1 L732.0 506.6 L733.0 507.2 L734.0 507.7 L735.0 508.3 L736.0 508.8 L737.0 509.4 L738.0 509.9 L739.0 510.5 L740.0 511.0 L741.0 511.6 L742.0 512.1 L743.0 512.7 L744.0 513.3 L745.0 513.9 L746.0 514.4 L747.0 515.0 L748.0 515.6 L749.0 516.3 L750.0 516.9 L751.0 517.6 L752.0 518.2 L753.0 518.9 L754.0 519.6 L755.0 520.3 L756.0 520.9 L757.0 521.5 L758.0 522.1 L759.0 522.7 L760.0 523.3 L761.0 523.9 L762.0 524.5 L763.0 525.1 L764.0 525.7 L765.0 526.3 L766.0 526.9 L767.0 527.4 L768.0 528.0 L769.0 528.6 L770.0 529.2 L771.0 529.9 L772.0 530.5 L773.0 531.1 L774.0 531.7 L775.0 532.4 L776.0 533.0 L777.0 533.7 L778.0 534.3 L779.0 535.0 L780.0 535.6 L781.0 536.3 L782.0 536.9 L783.0 537.6 L784.0 538.2 L785.0 538.9 L786.0 539.5 L787.0 540.2 L788.0 540.8 L789.0 541.5 L790.0 542.1 L791.0 542.8 L792.0 543.4 L793.0 544.1 L794.0 544.7 L795.0 545.4 L796.0 546.0 L797.0 546.7 L798.0 547.3 L799.0 548.0 L800.0 548.6 L801.0 549.3 L802.0 549.9 L803.0 550.6 L804.0 551.2 L805.0 551.9 L806.0 552.5 L807.0 553.2 L808.0 553.9 L809.0 554.5 L810.0 555.2 L811.0 555.9 L812.0 556.5 L813.0 557.2 L814.0 557.9 L815.0 558.5 L816.0 559.2 L817.0 559.8 L818.0 560.4 L819.0 561.0 L820.0 561.7 L821.0 562.3 L822.0 562.9 L823.0 563.5 L824.0 564.1 L825.0 564.7 L826.0 565.3 L827.0 565.9 L828.0 566.5 L829.0 567.0 L830.0 567.6 L831.0 568.2 L832.0 568.8 L833.0 569.3 L834.0 569.9 L835.0 570.5 L836.0 571.0 L837.0 571.6 L838.0 572.1" stroke="#bf8a00"/>
<path d="M56.0 145.2 L57.0 145.2 L58.0 145.2 L59.0 145.2 L60.0 145.2 L61.0 145.3 L62.0 145.3 L63.0 145.3 L64.0 145.3 L65.0 145.3 L66.0 145.3 L67.0 145.3 L68.0 145.4 L69.0 145.4 L70.0 145.4 L71.0 145.4 L72.0 145.4 L73.0 145.4 L74.0 145.5 L75.0 145.5 L76.0 145.5 L77.0 145.5 L78.0 145.5 L79.0 145.6 L80.0 145.6 L81.0 145.6 L82.0 145.6 L83.0 145.6 L84.0 145.7 L85.0 145.7 L86.0 145.7 L87.0 145.7 L88.0 145.8 L89.0 145.8 L90.0 145.8 L91.0 145.8 L92.0 145.8 L93.0 145.9 L94.0 145.9 L95.0 145.9 L96.0 145.9 L97.0 146.0 L98.0 146.0 L99.0 146.0 L100.0 146.0 L101.0 146.1 L102.0 146.1 L103.0 146.1 L104.0 146.2 L105.0 146.2 L106.0 146.2 L107.0 146.3 L108.0 146.3 L109.0 146.3 L110.0 146.4 L111.0 146.4 L112.0 146.5 L113.0 146.5 L114.0 146.5 L115.0 146.6 L116.0 146.6 L117.0 146.7 L118.0 146.7 L119.0 146.8 L120.0 146.9 L121.0 147.0 L122.0 147.1 L123.0 147.2 L124.0 147.3 L125.0 147.4 L126.0 147.6 L127.0 147.7 L128.0 147.8 L129.0 148.0 L130.0 148.1 L131.0 148.2 L132.0 148.3 L133.0 148.4 L134.0 148.5 L135.0 148.6 L136.0 148.6 L137.0 148.7 L138.0 148.8 L139.0 148.9 L140.0 148.9 L141.0 149.0 L142.0 149.0 L143.0 149.1 L144.0 149.2 L145.0 149.2 L146.0 149.3 L147.0 149.3 L148.0 149.4 L149.0 149.5 L150.0 149.5 L151.0 149.6 L152.0 149.6 L153.0 149.7 L154.0 149.7 L155.0 149.8 L156.0 149.8 L157.0 149.9 L158.0 149.9 L159.0 150.0 L160.0 150.0 L161.0 150.1 L162.0 150.1 L163.0 150.2 L164.0 150.2 L165.0 150.3 L166.0 150.4 L167.0 150.4 L168.0 150.5 L169.0 150.6 L170.0 150.7 L171.0 150.8 L172.0 150.9 L173.0 151.0 L174.0 151.1 L175.0 151.3 L176.0 151.5 L177.0 151.6 L178.0 151.8 L179.0 152.0 L180.0 152.2 L181.0 152.4 L182.0 152.6 L183.0 152.9 L184.0 153.1 L185.0 153.3 L186.0 153.5 L187.0 153.7 L188.0 153.9 L189.0 154.1 L190.0 154.3 L191.0 154.5 L192.0 154.7 L193.0 154.9 L194.0 155.2 L195.0 155.4 L196.0 155.6 L197.0 155.8 L198.0 156.0 L199.0 156.2 L200.0 156.4 L201.0 156.6 L202.0 156.9 L203.0 157.1 L204.0 157.3 L205.0 157.5 L206.0 157.8 L207.0 158.0 L208.0 158.3 L209.0 158.5 L210.0 158.7 L211.0 159.0 L212.0 159.3 L213.0 159.5 L214.0 159.8 L215.0 160.1 L216.0 160.3 L217.0 160.6 L218.0 160.9 L219.0 161.2 L220.0 161.5 L221.0 161.8 L222.0 162.1 L223.0 162.4 L224.0 162.7 L225.0 163.0 L226.0 163.3 L227.0 163.6 L228.0 164.0 L229.0 164.3 L230.0 164.6 L231.0 164.9 L232.0 165.3 L233.0 165.6 L234.0 165.9 L235.0 166.3 L236.0 166.6 L237.0 166.9 L238.0 167.2 L239.0 167.6 L240.0 167.9 L241.0 168.2 L242.0 168.5 L243.0 168.9 L244.0 169.2 L245.0 169.5 L246.0 169.9 L247.0 170.2 L248.0 170.5 L249.0 170.8 L250.0 171.2 L251.0 171.6 L252.0 171.9 L253.0 172.3 L254.0 172.7 L255.0 173.1 L256.0 173.4 L257.0 173.8 L258.0 174.2 L259.0 174.6 L260.0 175.1 L261.0 175.5 L262.0 175.9 L263.0 176.3 L264.0 176.7 L265.0 177.2 L266.0 177.6 L267.0 178.1 L268.0 178.6 L269.0 179.1 L270.0 179.6 L271.0 180.1 L272.0 180.6 L273.0 181.2 L274.0 181.7 L275.0 182.2 L276.0 182.7 L277.0 183.3 L278.0 183.8 L279.0 184.3 L280.0 184.8 L281.0 185.2 L282.0 185.7 L283.0 186.1 L284.0 186.5 L285.0 186.9 L286.0 187.3 L287.0 187.7 L288.0 188.0 L289.0 188.4 L290.0 188.8 L291.0 189.2 L292.0 189.5 L293.0 189.9 L294.0 190.3 L295.0 190.7 L296.0 191.2 L297.0 191.6 L298.0 192.1 L299.0 192.6 L300.0 193.1 L301.0 193.6 L302.0 194.1 L303.0 194.6 L304.0 195.2 L305.0 195.8 L306.0 196.3 L307.0 196.9 L308.0 197.5 L309.0 198.0 L310.0 198.6 L311.0 199.2 L312.0 199.8 L313.0 200.4 L314.0 200.9 L315.0 201.5 L316.0 202.1 L317.0 202.7 L318.0 203.3 L319.0 203.8 L320.0 204.4 L321.0 205.0 L322.0 205.6 L323.0 206.2 L324.0 206.8 L325.0 207.5 L326.0 208.1 L327.0 208.7 L328.0 209.3 L329.0 210.0 L330.0 210.6 L331.0 211.3 L332.0 211.9 L333.0 212.6 L334.0 213.3 L335.0 213.9 L336.0 214.6 L337.0 215.3 L338.0 216.0 L339.0 216.6 L340.0 217.3 L341.0 218.0 L342.0 218.6 L343.0 219.3 L344.0 219.9 L345.0 220.6 L346.0 221.3 L347.0 221.9 L348.0 222.6 L349.0 223.2 L350.0 223.9 L351.0 224.5 L352.0 225.2 L353.0 225.8 L354.0 226.4 L355.0 227.1 L356.0 227.7 L357.0 228.3 L358.0 228.9 L359.0 229.5 L360.0 230.1 L361.0 230.7 L362.0 231.3 L363.0 231.9 L364.0 232.5 L365.0 233.1 L366.0 233.7 L367.0 234.3 L368.0 234.9 L369.0 235.5 L370.0 236.1 L371.0 236.7 L372.0 237.4 L373.0 238.0 L374.0 238.7 L375.0 239.4 L376.0 240.0 L377.0 240.7 L378.0 241.4 L379.0 242.1 L380.0 242.8 L381.0 243.5 L382.0 244.2 L383.0 244.9 L384.0 245.7 L385.0 246.4 L386.0 247.1 L387.0 247.9 L388.0 248.6 L389.0 249.4 L390.0 250.1 L391.0 250.9 L392.0 251.8 L393.0 252.6 L394.0 253.4 L395.0 254.2 L396.0 255.0 L397.0 255.8 L398.0 256.7 L399.0 257.5 L400.0 258.3 L401.0 259.1 L402.0 259.8 L403.0 260.6 L404.0 261.3 L405.0 262.0 L406.0 262.7 L407.0 263.4 L408.0 264.0 L409.0 264.7 L410.0 265.4 L411.0 266.0 L412.0 266.7 L413.0 267.4 L414.0 268.1 L415.0 268.8 L416.0 269.5 L417.0 270.2 L418.0 271.0 L419.0 271.8 L420.0 272.7 L421.0 273.6 L422.0 274.6 L423.0 275.6 L424.0 276.6 L425.0 277.6 L426.0 278.6 L427.0 279.6 L428.0 280.6 L429.0 281.5 L430.0 282.4 L431.0 283.2 L432.0 284.0 L433.0 284.8 L434.0 285.6 L435.0 286.3 L436.0 287.0 L437.0 287.8 L438.0 288.5 L439.0 289.2 L440.0 289.9 L441.0 290.6 L442.0 291.3 L443.0 292.1 L444.0 292.8 L445.0 293.6 L446.0 294.4 L447.0 295.3 L448.0 296.1 L449.0 297.0 L450.0 297.9 L451.0 298.8 L452.0 299.7 L453.0 300.6 L454.0 301.5 L455.0 302.4 L456.0 303.4 L457.0 304.3 L458.0 305.2 L459.0 306.1 L460.0 307.0 L461.0 307.9 L462.0 308.8 L463.0 309.7 L464.0 310.6 L465.0 311.5 L466.0 312.4 L467.0 313.3 L468.0 314.2 L469.0 315.1 L470.0 316.0 L471.0 316.9 L472.0 317.8 L473.0 318.7 L474.0 319.6 L475.0 320.5 L476.0 321.4 L477.0 322.3 L478.0 323.2 L479.0 324.1 L480.0 325.0 L481.0 325.9 L482.0 326.8 L483.0 327.7 L484.0 328.6 L485.0 329.5 L486.0 330.4 L487.0 331.2 L488.0 332.1 L489.0 333.0 L490.0 333.9 L491.0 334.9 L492.0 335.8 L493.0 336.7 L494.0 337.6 L495.0 338.6 L496.0 339.5 L497.0 340.5 L498.0 341.4 L499.0 342.4 L500.0 343.3 L501.0 344.3 L502.0 345.3 L503.0 346.2 L504.0 347.2 L505.0 348.1 L506.0 349.1 L507.0 350.0 L508.0 350.9 L509.0 351.9 L510.0 352.8 L511.0 353.7 L512.0 354.6 L513.0 355.5 L514.0 356.4 L515.0 357.3 L516.0 358.2 L517.0 359.0 L518.0 359.9 L519.0 360.8 L520.0 361.6 L521.0 362.4 L522.0 363.3 L523.0 364.1 L524.0 364.9 L525.0 365.7 L526.0 366.5 L527.0 367.3 L528.0 368.1 L529.0 368.9 L530.0 369.7 L531.0 370.5 L532.0 371.3 L533.0 372.1 L534.0 372.8 L535.0 373.6 L536.0 374.4 L537.0 375.2 L538.0 376.0 L539.0 376.8 L540.0 377.7 L541.0 378.5 L542.0 379.3 L543.0 380.1 L544.0 380.9 L545.0 381.7 L546.0 382.5 L547.0 383.3 L548.0 384.0 L549.0 384.8 L550.0 385.6 L551.0 386.4 L552.0 387.2 L553.0 387.9 L554.0 388.7 L555.0 389.4 L556.0 390.2 L557.0 390.9 L558.0 391.6 L559.0 392.4 L560.0 393.1 L561.0 393.8 L562.0 394.6 L563.0 395.3 L564.0 396.1 L565.0 396.8 L566.0 397.6 L567.0 398.3 L568.0 399.1 L569.0 399.9 L570.0 400.7 L571.0 401.5 L572.0 402.3 L573.0 403.1 L574.0 403.9 L575.0 404.8 L576.0 405.6 L577.0 406.4 L578.0 407.2 L579.0 408.0 L580.0 408.8 L581.0 409.6 L582.0 410.4 L583.0 411.2 L584.0 412.0 L585.0 412.7 L586.0 413.5 L587.0 414.3 L588.0 415.1 L589.0 415.9 L590.0 416.7 L591.0 417.5 L592.0 418.2 L593.0 419.0 L594.0 419.7 L595.0 420.5 L596.0 421.2 L597.0 421.9 L598.0 422.5 L599.0 423.2 L600.0 423.8 L601.0 424.3 L602.0 424.9 L603.0 425.4 L604.0 425.9 L605.0 426.5 L606.0 427.0 L607.0 427.5 L608.0 428.0 L609.0 428.6 L610.0 429.1 L611.0 429.7 L612.0 430.3 L613.0 430.9 L614.0 431.6 L615.0 432.2 L616.0 432.9 L617.0 433.6 L618.0 434.3 L619.0 435.0 L620.0 435.7 L621.0 436.4 L622.0 437.0 L623.0 437.7 L624.0 438.4 L625.0 439.0 L626.0 439.6 L627.0 440.3 L628.0 440.9 L629.0 441.6 L630.0 442.2 L631.0 442.8 L632.0 443.5 L633.0 444.1 L634.0 444.7 L635.0 445.3 L636.0 446.0 L637.0 446.6 L638.0 447.2 L639.0 447.9 L640.0 448.5 L641.0 449.1 L642.0 449.8 L643.0 450.4 L644.0 451.0 L645.0 451.6 L646.0 452.2 L647.0 452.8 L648.0 453.3 L649.0 453.9 L650.0 454.4 L651.0 454.9 L652.0 455.5 L653.0 456.0 L654.0 456.5 L655.0 457.1 L656.0 457.6 L657.0 458.1 L658.0 458.7 L659.0 459.3 L660.0 459.9 L661.0 460.5 L662.0 461.1 L663.0 461.7 L664.0 462.4 L665.0 463.1 L666.0 463.7 L667.0 464.4 L668.0 465.2 L669.0 465.9 L670.0 466.6 L671.0 467.3 L672.0 468.0 L673.0 468.8 L674.0 469.5 L675.0 470.2 L676.0 470.9 L677.0 471.6 L678.0 472.2 L679.0 472.9 L680.0 473.6 L681.0 474.3 L682.0 474.9 L683.0 475.6 L684.0 476.3 L685.0 476.9 L686.0 477.6 L687.0 478.2 L688.0 478.9 L689.0 479.5 L690.0 480.1 L691.0 480.8 L692.0 481.4 L693.0 482.0 L694.0 482.5 L695.0 483.1 L696.0 483.7 L697.0 484.2 L698.0 484.8 L699.0 485.3 L700.0 485.9 L701.0 486.4 L702.0 486.9 L703.0 487.4 L704.0 488.0 L705.0 488.5 L706.0 489.1 L707.0 489.6 L708.0 490.2 L709.0 490.7 L710.0 491.3 L711.0 491.9 L712.0 492.5 L713.0 493.1 L714.0 493.7 L715.0 494.3 L716.0 494.9 L717.0 495.5 L718.0 496.1 L719.0 496.7 L720.0 497.3 L721.0 497.9 L722.0 498.5 L723.0 499.1 L724.0 499.7 L725.0 500.3 L726.0 500.9 L727.0 501.4 L728.0 502.0 L729.0 502.6 L730.0 503.1 L731.0 503.6 L732.0 504.1 L733.0 504.7 L734.0 505.1 L735.0 505.6 L736.0 506.1 L737.0 506.6 L738.0 507.1 L739.0 507.5 L740.0 508.0 L741.0 508.5 L742.0 509.0 L743.0 509.4 L744.0 509.9 L745.0 510.4 L746.0 510.9 L747.0 511.5 L748.0 512.0 L749.0 512.6 L750.0 513.1 L751.0 513.7 L752.0 514.3 L753.0 515.0 L754.0 515.6 L755.0 516.2 L756.0 516.9 L757.0 517.6 L758.0 518.2 L759.0 518.9 L760.0 519.6 L761.0 520.3 L762.0 521.0 L763.0 521.8 L764.0 522.5 L765.0 523.2 L766.0 523.9 L767.0 524.6 L768.0 525.3 L769.0 526.0 L770.0 526.7 L771.0 527.4 L772.0 528.1 L773.0 528.8 L774.0 529.4 L775.0 530.1 L776.0 530.8 L777.0 531.4 L778.0 532.1 L779.0 532.7 L780.0 533.4 L781.0 534.0 L782.0 534.6 L783.0 535.3 L784.0 535.9 L785.0 536.6 L786.0 537.2 L787.0 537.9 L788.0 538.5 L789.0 539.2 L790.0 539.8 L791.0 540.5 L792.0 541.1 L793.0 541.8 L794.0 542.4 L795.0 543.1 L796.0 543.7 L797.0 544.4 L798.0 545.0 L799.0 545.7 L800.0 546.3 L801.0 547.0 L802.0 547.6 L803.0 548.3 L804.0 548.9 L805.0 549.6 L806.0 550.2 L807.0 550.8 L808.0 551.5 L809.0 552.1 L810.0 552.8 L811.0 553.4 L812.0 554.1 L813.0 554.7 L814.0 555.4 L815.0 556.0 L816.0 556.7 L817.0 557.3 L818.0 558.0 L819.0 558.7 L820.0 559.3 L821.0 560.0 L822.0 560.7 L823.0 561.4 L824.0 562.0 L825.0 562.7 L826.0 563.4 L827.0 564.1 L828.0 564.8 L829.0 565.5 L830.0 566.2 L831.0 566.9 L832.0 567.6 L833.0 568.3 L834.0 569.0 L835.0 569.7 L836.0 570.4 L837.0 571.1 L838.0 571.8" stroke="#ff0000"/>
</g></svg>
<div class="a pl" style="right:848.5px;top:118px;color:#c0c0c0;text-align:right">60dB</div>
<div class="a pl" style="right:848.5px;top:175px;color:#c0c0c0;text-align:right">50dB</div>
<div class="a pl" style="right:848.5px;top:232px;color:#c0c0c0;text-align:right">40dB</div>
<div class="a pl" style="right:848.5px;top:289px;color:#c0c0c0;text-align:right">30dB</div>
<div class="a pl" style="right:848.5px;top:346px;color:#c0c0c0;text-align:right">20dB</div>
<div class="a pl" style="right:848.5px;top:403px;color:#c0c0c0;text-align:right">10dB</div>
<div class="a pl" style="right:848.5px;top:460px;color:#c0c0c0;text-align:right">0dB</div>
<div class="a pl" style="right:848.5px;top:517px;color:#c0c0c0;text-align:right">-10dB</div>
<div class="a pl" style="right:848.5px;top:574px;color:#c0c0c0;text-align:right">-20dB</div>
<div class="a pl" style="left:848px;top:118px;color:#c0c0c0">-120°</div>
<div class="a pl" style="left:848px;top:159px;color:#c0c0c0">-140°</div>
<div class="a pl" style="left:848px;top:201px;color:#c0c0c0">-160°</div>
<div class="a pl" style="left:848px;top:242px;color:#c0c0c0">-180°</div>
<div class="a pl" style="left:848px;top:284px;color:#c0c0c0">-200°</div>
<div class="a pl" style="left:848px;top:325px;color:#c0c0c0">-220°</div>
<div class="a pl" style="left:848px;top:367px;color:#c0c0c0">-240°</div>
<div class="a pl" style="left:848px;top:408px;color:#c0c0c0">-260°</div>
<div class="a pl" style="left:848px;top:450px;color:#c0c0c0">-280°</div>
<div class="a pl" style="left:848px;top:491px;color:#c0c0c0">-300°</div>
<div class="a pl" style="left:848px;top:533px;color:#c0c0c0">-320°</div>
<div class="a pl" style="left:848px;top:574px;color:#c0c0c0">-340°</div>
<div class="a pl" style="left:16px;width:80px;top:591px;color:#c0c0c0;text-align:center">1KHz</div>
<div class="a pl" style="left:212px;width:80px;top:591px;color:#c0c0c0;text-align:center">10KHz</div>
<div class="a pl" style="left:407px;width:80px;top:591px;color:#c0c0c0;text-align:center">100KHz</div>
<div class="a pl" style="left:603px;width:80px;top:591px;color:#c0c0c0;text-align:center">1MHz</div>
<div class="a pl" style="left:798px;width:80px;top:591px;color:#c0c0c0;text-align:center">10MHz</div>
<div class="a lg" style="left:105px;top:109px;color:#ff0000">V(eugene)/V(in)</div>
<div class="a lg" style="left:302px;top:109px;color:#00ff00">V(helmut)/V(in)</div>
<div class="a lg" style="left:509px;top:109px;color:#00b0b0">V(old)/V(in)</div>
<div class="a lg" style="left:693px;top:109px;color:#bf8a00">V(ti_new)/V(in)</div>
<div class="a" style="left:8px;top:609px;width:881px;height:1px;background:#a0a0a0"></div>
<div class="a" style="left:8px;top:610px;width:881px;height:18px;background:#f0efed"></div>
<div class="a" style="left:869px;top:612px;width:1px;height:15px;background:#a0a0a0"></div>
<svg class="a" style="left:880px;top:619px" width="9" height="9" viewBox="0 0 9 9" shape-rendering="crispEdges"><path d="M7 1h1v1h-1zM4 4h1v1h-1zM7 4h1v1h-1zM1 7h1v1h-1zM4 7h1v1h-1zM7 7h1v1h-1z" fill="#fff"/><path d="M6 0h1.5v1.5h-1.5zM3 3h1.5v1.5h-1.5zM6 3h1.5v1.5h-1.5zM0 6h1.5v1.5h-1.5zM3 6h1.5v1.5h-1.5zM6 6h1.5v1.5h-1.5z" fill="#9a9a9a"/></svg>
<div class="t st" style="left:10.5px;top:613px">Click to manually enter Horizontal Axis Limits</div>
<style>
.pl{font-family:"Liberation Sans",sans-serif;font-size:14px;line-height:14px;white-space:nowrap;-webkit-text-stroke:0.4px #c0c0c0;letter-spacing:0.5px}
.lg{font-family:"Liberation Sans",sans-serif;font-weight:bold;font-size:14px;line-height:14px;white-space:nowrap;transform-origin:0 0;transform:scaleX(0.9);letter-spacing:0.3px}
</style>
</body></html>
